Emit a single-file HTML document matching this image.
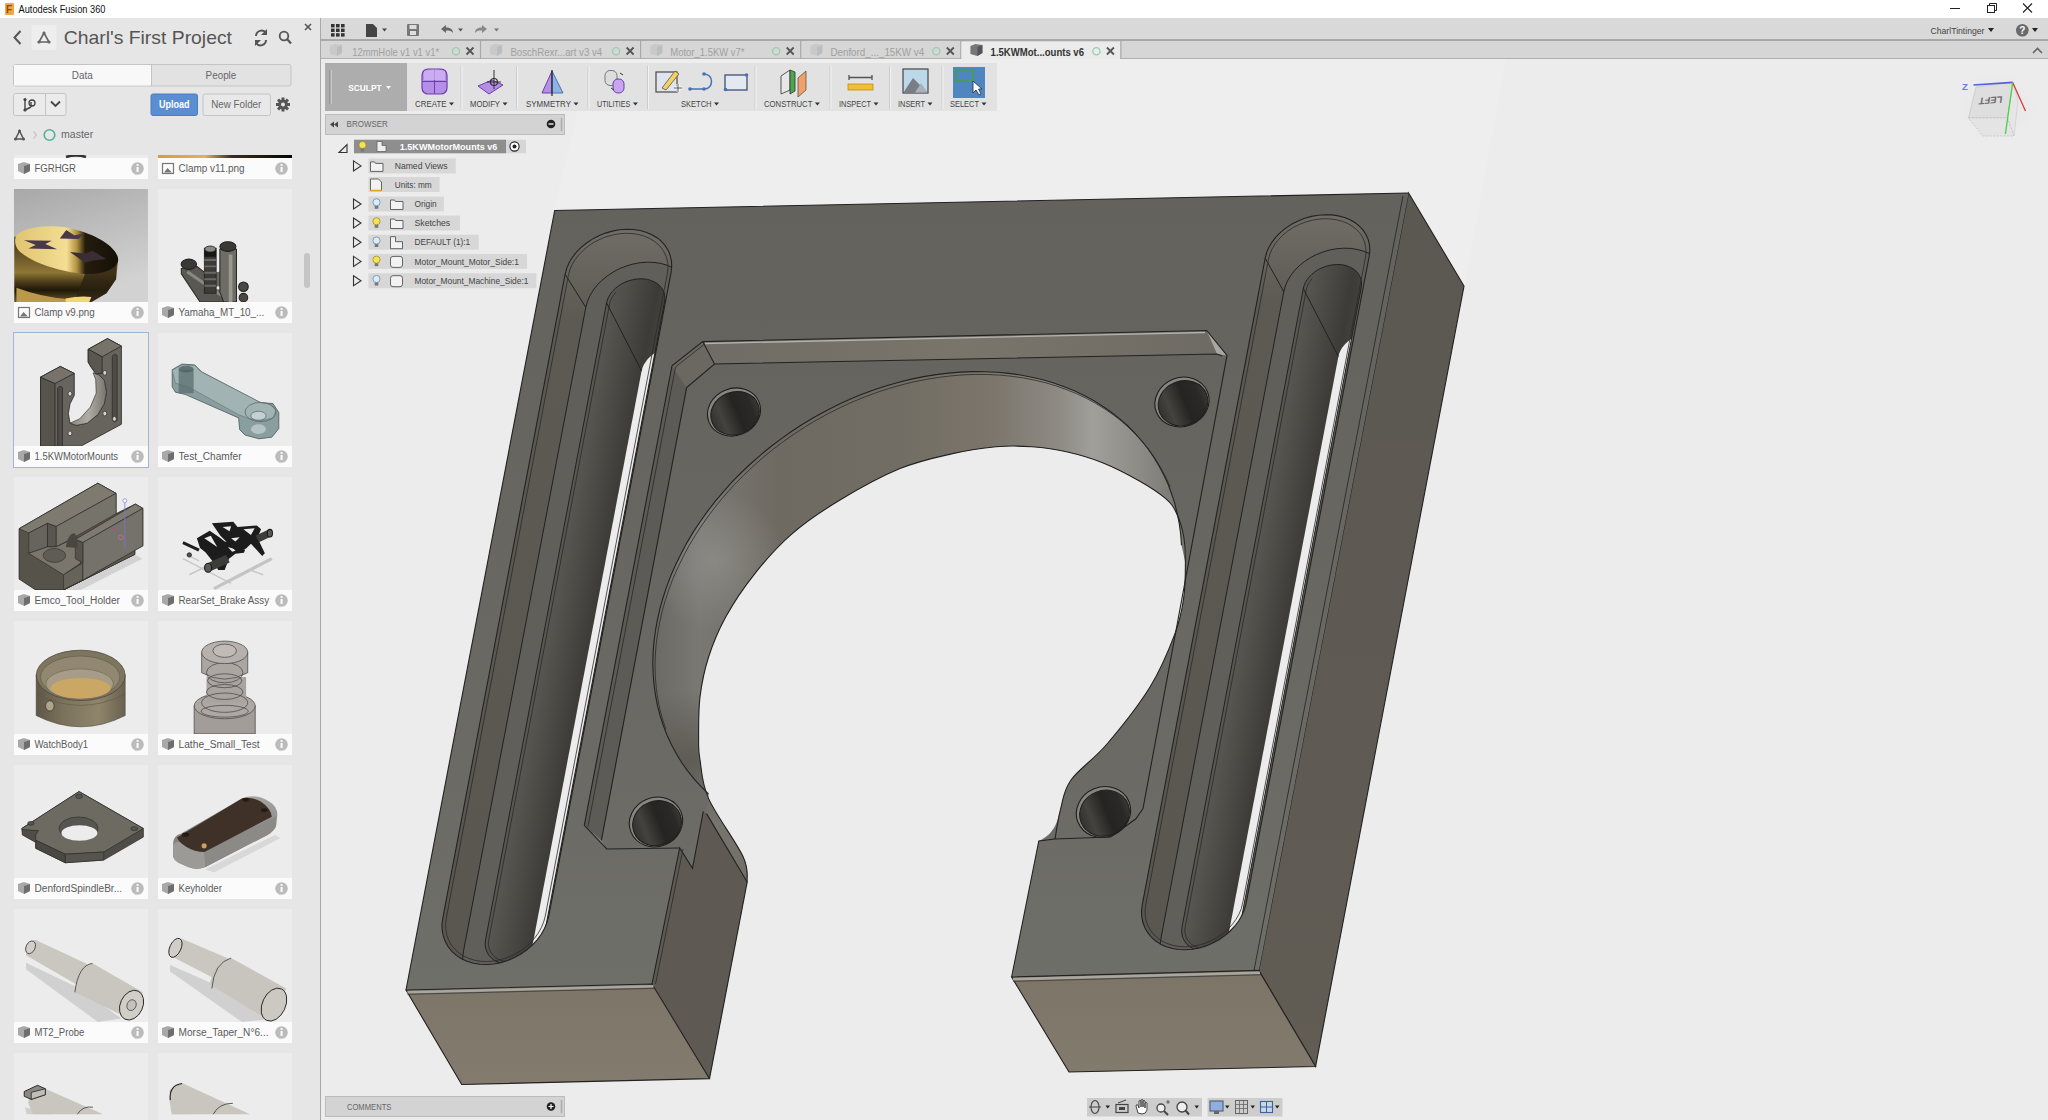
<!DOCTYPE html><html><head><meta charset="utf-8"><style>

*{box-sizing:border-box;margin:0;padding:0}
html,body{width:2048px;height:1120px;overflow:hidden;background:#ececec;font-family:"Liberation Sans", sans-serif;}
.a{position:absolute}
.t{position:absolute;white-space:nowrap;line-height:1}
svg{position:absolute;overflow:visible}

</style></head><body>
<svg style="left:0;top:0" width="2048" height="1120">
<defs>
<linearGradient id="topg" x1="0" y1="200" x2="0" y2="990" gradientUnits="userSpaceOnUse"><stop offset="0" stop-color="#63625d"/><stop offset="0.5" stop-color="#686762"/><stop offset="1" stop-color="#6f6f6a"/></linearGradient>
<linearGradient id="sideg" x1="0" y1="190" x2="0" y2="1070" gradientUnits="userSpaceOnUse"><stop offset="0" stop-color="#5b5852"/><stop offset="1" stop-color="#615c54"/></linearGradient>
<linearGradient id="frontg" x1="0" y1="980" x2="0" y2="1085" gradientUnits="userSpaceOnUse"><stop offset="0" stop-color="#7c7568"/><stop offset="1" stop-color="#827b6e"/></linearGradient>
<linearGradient id="boreg" x1="650" y1="0" x2="1190" y2="0" gradientUnits="userSpaceOnUse"><stop offset="0" stop-color="#6a6862"/><stop offset="0.09" stop-color="#7a7873"/><stop offset="0.24" stop-color="#6e6a62"/><stop offset="0.46" stop-color="#726d64"/><stop offset="0.63" stop-color="#7b756b"/><stop offset="0.76" stop-color="#8e8b85"/><stop offset="0.82" stop-color="#a19f9a"/><stop offset="0.9" stop-color="#8f8d88"/><stop offset="1" stop-color="#74726d"/></linearGradient>
<radialGradient id="borehl" cx="715" cy="560" r="70" gradientUnits="userSpaceOnUse"><stop offset="0" stop-color="#9a9894" stop-opacity="0.55"/><stop offset="1" stop-color="#9a9894" stop-opacity="0"/></radialGradient>
<radialGradient id="boredk" cx="690" cy="760" r="70" gradientUnits="userSpaceOnUse"><stop offset="0" stop-color="#4e4a43" stop-opacity="0.6"/><stop offset="1" stop-color="#4e4a43" stop-opacity="0"/></radialGradient>
<linearGradient id="pwallg" x1="700" y1="0" x2="1220" y2="0" gradientUnits="userSpaceOnUse"><stop offset="0" stop-color="#6f6c65"/><stop offset="0.5" stop-color="#7a756b"/><stop offset="1" stop-color="#6e6b64"/></linearGradient>
<linearGradient id="holeg" x1="0" y1="0" x2="1" y2="0"><stop offset="0" stop-color="#333230"/><stop offset="0.22" stop-color="#45433f"/><stop offset="0.55" stop-color="#252422"/><stop offset="0.85" stop-color="#2a2927"/><stop offset="1" stop-color="#3a3936"/></linearGradient>
<linearGradient id="cbwL" x1="0" y1="230" x2="0" y2="960" gradientUnits="userSpaceOnUse"><stop offset="0" stop-color="#706d67"/><stop offset="0.12" stop-color="#5d5a53"/><stop offset="1" stop-color="#5a5650"/></linearGradient>
<linearGradient id="cbwR" x1="0" y1="215" x2="0" y2="950" gradientUnits="userSpaceOnUse"><stop offset="0" stop-color="#706d67"/><stop offset="0.12" stop-color="#5d5a53"/><stop offset="1" stop-color="#5a5650"/></linearGradient>
<linearGradient id="thwL" x1="569" y1="500" x2="627" y2="511" gradientUnits="userSpaceOnUse"><stop offset="0" stop-color="#5a5853"/><stop offset="0.35" stop-color="#4e4c47"/><stop offset="0.8" stop-color="#3d3b37"/><stop offset="1" stop-color="#45433e"/></linearGradient>
<linearGradient id="thwR" x1="1263" y1="500" x2="1321" y2="511" gradientUnits="userSpaceOnUse"><stop offset="0" stop-color="#5a5853"/><stop offset="0.35" stop-color="#4e4c47"/><stop offset="0.8" stop-color="#3d3b37"/><stop offset="1" stop-color="#45433e"/></linearGradient>
</defs>
<path d="M590,59 L1506,59 L1465,286 L1408,193 L554,210Z" fill="#ffffff" opacity="0.12"/>
<path d="M1408.6,193.0 L1464.0,286.0 L1315.6,1066.5 L1258.8,970.4Z" fill="url(#sideg)" stroke="#222" stroke-width="1.1"/>
<path d="M554.7,210.5 L1408.6,193.0 L1258.8,970.4 L1315.6,1066.5 L1069.0,1072.0 L1011.6,977.0 L1038.8,841.0 C1056.0,833.9 1058.0,818.4 1060.7,808.6 C1063.4,798.8 1063.3,790.8 1071.0,780.0 C1078.7,769.2 1093.8,759.5 1107.0,744.0 C1120.2,728.5 1138.7,705.4 1150.0,687.0 C1161.3,668.6 1169.4,648.3 1175.0,633.6 C1180.6,618.9 1181.9,610.4 1183.6,598.6 C1185.3,586.8 1185.4,573.3 1185.4,562.9 C1185.4,552.5 1185.1,544.3 1183.6,536.0 C1182.1,527.7 1179.4,519.1 1176.4,512.9 C1173.4,506.7 1171.9,504.0 1165.7,498.6 C1159.5,493.2 1149.4,486.6 1139.0,480.7 C1128.6,474.8 1115.1,467.7 1103.2,462.9 C1091.3,458.1 1079.4,454.7 1067.5,452.0 C1055.6,449.3 1043.7,447.7 1031.8,446.8 C1019.9,445.9 1009.4,445.6 996.0,446.8 C982.6,448.0 967.4,450.3 951.4,453.9 C935.4,457.5 918.6,460.9 900.0,468.6 C881.4,476.3 858.1,489.1 840.0,500.0 C821.9,510.9 805.7,521.9 791.4,534.3 C777.1,546.7 765.2,560.5 754.3,574.3 C743.3,588.1 733.3,603.2 725.7,617.0 C718.1,630.8 712.9,643.7 708.6,657.0 C704.3,670.3 701.7,683.2 700.0,697.0 C698.3,710.8 698.6,729.5 698.6,740.0 C698.6,750.5 698.3,750.2 700.0,760.0 C701.7,769.8 701.4,782.5 708.6,798.6 C715.8,814.7 736.6,842.6 743.0,856.5 C749.4,870.4 746.5,877.8 747.2,882.0 L709.5,1078.6 L461.7,1084.5 L406,990Z" fill="url(#topg)"/>
<path d="M672.0,365.7 L686.6,387.6 L601.4,840.4 L584.3,825.4Z" fill="#5d5b56"/>
<path d="M702.7,341.6 L1206.7,330.5 L1217.0,354.0 L714.5,364.0Z" fill="url(#pwallg)"/>
<path d="M672.0,365.7 L702.7,341.6 L714.5,364.0 L686.6,387.6Z" fill="#6b6862"/>
<path d="M1206.7,330.5 L1227.0,355.4 L1217.0,354.0Z" fill="#a9a7a2"/>
<path d="M584.3,825.4 L601.4,840.4 L606.8,849.0Z" fill="#8a8984"/>
<path d="M708.5,793.9 L701.1,786.7 L694.2,779.1 L687.8,771.1 L681.8,762.7 L676.5,754.0 L671.6,745.0 L667.3,735.7 L663.5,726.1 L660.3,716.3 L657.6,706.2 L655.6,695.9 L654.1,685.4 L653.2,674.8 L652.8,664.0 L653.1,653.1 L653.9,642.1 L655.4,631.0 L657.4,619.8 L659.9,608.7 L663.1,597.5 L666.8,586.4 L671.0,575.3 L675.9,564.3 L681.2,553.4 L687.0,542.6 L693.4,531.9 L700.3,521.5 L707.6,511.2 L715.4,501.1 L723.7,491.3 L732.3,481.7 L741.4,472.5 L750.9,463.5 L760.7,454.8 L770.9,446.5 L781.4,438.6 L792.2,431.0 L803.3,423.8 L814.7,417.0 L826.2,410.7 L838.0,404.8 L849.9,399.3 L862.0,394.3 L874.2,389.8 L886.5,385.7 L898.9,382.2 L911.3,379.1 L923.7,376.6 L936.2,374.6 L948.5,373.1 L960.8,372.1 L973.0,371.6 L985.1,371.7 L997.1,372.3 L1008.8,373.4 L1020.4,375.0 L1031.7,377.2 L1042.8,379.8 L1053.6,383.0 L1064.1,386.7 L1074.2,390.8 L1084.1,395.5 L1093.5,400.6 L1102.6,406.2 L1111.3,412.2 L1119.5,418.6 L1127.3,425.5 L1134.6,432.8 L1141.4,440.5 L1147.8,448.5 L1153.6,456.9 L1158.9,465.7 L1163.7,474.7 L1168.0,484.1 L1171.6,493.7 L1174.8,503.6 L1177.3,513.7 L1179.3,524.0 L1180.7,534.5 L1181.5,545.2 L1185.4,562.9 C1185.1,558.4 1185.1,544.3 1183.6,536.0 C1182.1,527.7 1179.4,519.1 1176.4,512.9 C1173.4,506.7 1171.9,504.0 1165.7,498.6 C1159.5,493.2 1149.4,486.6 1139.0,480.7 C1128.6,474.8 1115.1,467.7 1103.2,462.9 C1091.3,458.1 1079.4,454.7 1067.5,452.0 C1055.6,449.3 1043.7,447.7 1031.8,446.8 C1019.9,445.9 1009.4,445.6 996.0,446.8 C982.6,448.0 967.4,450.3 951.4,453.9 C935.4,457.5 918.6,460.9 900.0,468.6 C881.4,476.3 858.1,489.1 840.0,500.0 C821.9,510.9 805.7,521.9 791.4,534.3 C777.1,546.7 765.2,560.5 754.3,574.3 C743.3,588.1 733.3,603.2 725.7,617.0 C718.1,630.8 712.9,643.7 708.6,657.0 C704.3,670.3 701.7,683.2 700.0,697.0 C698.3,710.8 698.6,729.5 698.6,740.0 C698.6,750.5 698.3,750.2 700.0,760.0 C701.7,769.8 701.4,782.5 708.6,798.6 C715.8,814.7 736.6,842.6 743.0,856.5 C749.4,870.4 746.5,877.8 747.2,882.0 L706.5,813.6Z" fill="url(#boreg)"/>
<path d="M708.5,793.9 L701.1,786.7 L694.2,779.1 L687.8,771.1 L681.8,762.7 L676.5,754.0 L671.6,745.0 L667.3,735.7 L663.5,726.1 L660.3,716.3 L657.6,706.2 L655.6,695.9 L654.1,685.4 L653.2,674.8 L652.8,664.0 L653.1,653.1 L653.9,642.1 L655.4,631.0 L657.4,619.8 L659.9,608.7 L663.1,597.5 L666.8,586.4 L671.0,575.3 L675.9,564.3 L681.2,553.4 L687.0,542.6 L693.4,531.9 L700.3,521.5 L707.6,511.2 L715.4,501.1 L723.7,491.3 L732.3,481.7 L741.4,472.5 L750.9,463.5 L760.7,454.8 L770.9,446.5 L781.4,438.6 L792.2,431.0 L803.3,423.8 L814.7,417.0 L826.2,410.7 L838.0,404.8 L849.9,399.3 L862.0,394.3 L874.2,389.8 L886.5,385.7 L898.9,382.2 L911.3,379.1 L923.7,376.6 L936.2,374.6 L948.5,373.1 L960.8,372.1 L973.0,371.6 L985.1,371.7 L997.1,372.3 L1008.8,373.4 L1020.4,375.0 L1031.7,377.2 L1042.8,379.8 L1053.6,383.0 L1064.1,386.7 L1074.2,390.8 L1084.1,395.5 L1093.5,400.6 L1102.6,406.2 L1111.3,412.2 L1119.5,418.6 L1127.3,425.5 L1134.6,432.8 L1141.4,440.5 L1147.8,448.5 L1153.6,456.9 L1158.9,465.7 L1163.7,474.7 L1168.0,484.1 L1171.6,493.7 L1174.8,503.6 L1177.3,513.7 L1179.3,524.0 L1180.7,534.5 L1181.5,545.2 L1185.4,562.9 C1185.1,558.4 1185.1,544.3 1183.6,536.0 C1182.1,527.7 1179.4,519.1 1176.4,512.9 C1173.4,506.7 1171.9,504.0 1165.7,498.6 C1159.5,493.2 1149.4,486.6 1139.0,480.7 C1128.6,474.8 1115.1,467.7 1103.2,462.9 C1091.3,458.1 1079.4,454.7 1067.5,452.0 C1055.6,449.3 1043.7,447.7 1031.8,446.8 C1019.9,445.9 1009.4,445.6 996.0,446.8 C982.6,448.0 967.4,450.3 951.4,453.9 C935.4,457.5 918.6,460.9 900.0,468.6 C881.4,476.3 858.1,489.1 840.0,500.0 C821.9,510.9 805.7,521.9 791.4,534.3 C777.1,546.7 765.2,560.5 754.3,574.3 C743.3,588.1 733.3,603.2 725.7,617.0 C718.1,630.8 712.9,643.7 708.6,657.0 C704.3,670.3 701.7,683.2 700.0,697.0 C698.3,710.8 698.6,729.5 698.6,740.0 C698.6,750.5 698.3,750.2 700.0,760.0 C701.7,769.8 701.4,782.5 708.6,798.6 C715.8,814.7 736.6,842.6 743.0,856.5 C749.4,870.4 746.5,877.8 747.2,882.0 L706.5,813.6Z" fill="url(#borehl)"/>
<path d="M708.5,793.9 L701.1,786.7 L694.2,779.1 L687.8,771.1 L681.8,762.7 L676.5,754.0 L671.6,745.0 L667.3,735.7 L663.5,726.1 L660.3,716.3 L657.6,706.2 L655.6,695.9 L654.1,685.4 L653.2,674.8 L652.8,664.0 L653.1,653.1 L653.9,642.1 L655.4,631.0 L657.4,619.8 L659.9,608.7 L663.1,597.5 L666.8,586.4 L671.0,575.3 L675.9,564.3 L681.2,553.4 L687.0,542.6 L693.4,531.9 L700.3,521.5 L707.6,511.2 L715.4,501.1 L723.7,491.3 L732.3,481.7 L741.4,472.5 L750.9,463.5 L760.7,454.8 L770.9,446.5 L781.4,438.6 L792.2,431.0 L803.3,423.8 L814.7,417.0 L826.2,410.7 L838.0,404.8 L849.9,399.3 L862.0,394.3 L874.2,389.8 L886.5,385.7 L898.9,382.2 L911.3,379.1 L923.7,376.6 L936.2,374.6 L948.5,373.1 L960.8,372.1 L973.0,371.6 L985.1,371.7 L997.1,372.3 L1008.8,373.4 L1020.4,375.0 L1031.7,377.2 L1042.8,379.8 L1053.6,383.0 L1064.1,386.7 L1074.2,390.8 L1084.1,395.5 L1093.5,400.6 L1102.6,406.2 L1111.3,412.2 L1119.5,418.6 L1127.3,425.5 L1134.6,432.8 L1141.4,440.5 L1147.8,448.5 L1153.6,456.9 L1158.9,465.7 L1163.7,474.7 L1168.0,484.1 L1171.6,493.7 L1174.8,503.6 L1177.3,513.7 L1179.3,524.0 L1180.7,534.5 L1181.5,545.2 L1185.4,562.9 C1185.1,558.4 1185.1,544.3 1183.6,536.0 C1182.1,527.7 1179.4,519.1 1176.4,512.9 C1173.4,506.7 1171.9,504.0 1165.7,498.6 C1159.5,493.2 1149.4,486.6 1139.0,480.7 C1128.6,474.8 1115.1,467.7 1103.2,462.9 C1091.3,458.1 1079.4,454.7 1067.5,452.0 C1055.6,449.3 1043.7,447.7 1031.8,446.8 C1019.9,445.9 1009.4,445.6 996.0,446.8 C982.6,448.0 967.4,450.3 951.4,453.9 C935.4,457.5 918.6,460.9 900.0,468.6 C881.4,476.3 858.1,489.1 840.0,500.0 C821.9,510.9 805.7,521.9 791.4,534.3 C777.1,546.7 765.2,560.5 754.3,574.3 C743.3,588.1 733.3,603.2 725.7,617.0 C718.1,630.8 712.9,643.7 708.6,657.0 C704.3,670.3 701.7,683.2 700.0,697.0 C698.3,710.8 698.6,729.5 698.6,740.0 C698.6,750.5 698.3,750.2 700.0,760.0 C701.7,769.8 701.4,782.5 708.6,798.6 C715.8,814.7 736.6,842.6 743.0,856.5 C749.4,870.4 746.5,877.8 747.2,882.0 L706.5,813.6Z" fill="url(#boredk)"/>
<path d="M692.5,868.3 L703.3,811.4 L706.5,813.6 L747.2,882.0 L709.5,1078.6 L652.0,984.0 L679.7,848.0Z" fill="#5e5a53"/>
<path d="M406.0,990.0 L652.0,984.0 L709.5,1078.6 L461.7,1084.5Z" fill="url(#frontg)" stroke="#222" stroke-width="1.1"/>
<path d="M1011.6,977.0 L1258.8,970.4 L1315.6,1066.5 L1069.0,1072.0Z" fill="url(#frontg)" stroke="#222" stroke-width="1.1"/>
<path d="M407.5,992.2 L653.5,986.2" stroke="#a9a69e" stroke-width="2.6"/><path d="M407.5,994.3 L654.5,988.3" stroke="#3a3935" stroke-width="0.8"/><path d="M1013.1,979.2 L1260,972.7" stroke="#a9a69e" stroke-width="2.6"/><path d="M1013.1,981.3 L1261,974.8" stroke="#3a3935" stroke-width="0.8"/>
<clipPath id="rimL"><path d="M671.1,272.2 L671.7,266.5 L671.4,260.9 L670.2,255.5 L668.2,250.4 L665.2,245.7 L661.5,241.4 L657.0,237.7 L651.8,234.7 L646.1,232.2 L639.9,230.5 L633.3,229.5 L626.4,229.3 L619.4,229.8 L612.4,231.1 L605.5,233.1 L598.8,235.7 L592.4,239.1 L586.5,243.0 L581.1,247.4 L576.4,252.2 L572.3,257.5 L569.0,263.0 L566.6,268.6 L565.1,274.4 L442.8,918.1 L442.0,924.3 L442.2,930.3 L443.3,936.2 L445.4,941.7 L448.2,946.8 L451.9,951.4 L456.3,955.4 L461.5,958.7 L467.1,961.3 L473.3,963.2 L479.9,964.3 L486.7,964.5 L493.7,964.0 L500.8,962.6 L507.7,960.5 L514.5,957.6 L520.9,954.0 L526.9,949.8 L532.3,945.1 L537.2,939.8 L541.3,934.2 L544.6,928.2 L547.1,922.1 L548.8,915.9Z"/></clipPath>
<clipPath id="thrL"><path d="M664.6,301.7 L664.9,298.6 L664.7,295.6 L664.1,292.8 L662.9,290.0 L661.3,287.5 L659.2,285.3 L656.8,283.3 L653.9,281.7 L650.8,280.4 L647.4,279.4 L643.8,278.9 L640.0,278.8 L636.2,279.1 L632.4,279.8 L628.6,280.8 L624.9,282.2 L621.5,284.0 L618.2,286.1 L615.3,288.5 L612.7,291.1 L610.5,293.9 L608.7,296.8 L607.4,299.8 L606.6,302.9 L485.6,939.6 L485.2,942.9 L485.3,946.1 L486.0,949.3 L487.1,952.2 L488.6,954.9 L490.7,957.4 L493.1,959.5 L495.9,961.3 L499.0,962.7 L502.4,963.7 L506.0,964.2 L509.8,964.4 L513.6,964.1 L517.4,963.4 L521.2,962.2 L524.9,960.7 L528.4,958.8 L531.7,956.5 L534.7,954.0 L537.3,951.2 L539.5,948.2 L541.4,945.0 L542.7,941.7 L543.6,938.4Z"/></clipPath>
<clipPath id="lhalfL"><path d="M369,0 L663.8,0 L483.79999999999995,1100 L169,1100Z"/></clipPath>
<path d="M671.1,272.2 L671.7,266.5 L671.4,260.9 L670.2,255.5 L668.2,250.4 L665.2,245.7 L661.5,241.4 L657.0,237.7 L651.8,234.7 L646.1,232.2 L639.9,230.5 L633.3,229.5 L626.4,229.3 L619.4,229.8 L612.4,231.1 L605.5,233.1 L598.8,235.7 L592.4,239.1 L586.5,243.0 L581.1,247.4 L576.4,252.2 L572.3,257.5 L569.0,263.0 L566.6,268.6 L565.1,274.4 L442.8,918.1 L442.0,924.3 L442.2,930.3 L443.3,936.2 L445.4,941.7 L448.2,946.8 L451.9,951.4 L456.3,955.4 L461.5,958.7 L467.1,961.3 L473.3,963.2 L479.9,964.3 L486.7,964.5 L493.7,964.0 L500.8,962.6 L507.7,960.5 L514.5,957.6 L520.9,954.0 L526.9,949.8 L532.3,945.1 L537.2,939.8 L541.3,934.2 L544.6,928.2 L547.1,922.1 L548.8,915.9Z" fill="url(#cbwL)"/>
<g clip-path="url(#rimL)">
<path d="M691.8,305.1 L692.5,299.4 L692.2,293.8 L691.0,288.4 L688.9,283.3 L686.0,278.6 L682.2,274.3 L677.7,270.6 L672.6,267.6 L666.8,265.1 L660.6,263.4 L654.0,262.4 L647.2,262.2 L640.2,262.7 L633.2,264.0 L626.3,266.0 L619.6,268.6 L613.2,272.0 L607.3,275.9 L601.9,280.3 L597.1,285.1 L593.1,290.4 L589.8,295.9 L587.4,301.5 L585.8,307.3 L463.5,951.1 L462.8,957.3 L463.0,963.3 L464.1,969.2 L466.1,974.7 L469.0,979.8 L472.6,984.4 L477.1,988.4 L482.2,991.7 L487.9,994.3 L494.1,996.2 L500.6,997.3 L507.5,997.5 L514.5,997.0 L521.5,995.6 L528.4,993.5 L535.2,990.6 L541.6,987.0 L547.6,982.8 L553.1,978.1 L557.9,972.8 L562.0,967.2 L565.4,961.2 L567.9,955.1 L569.5,948.9Z" fill="#605f5a"/>
<path d="M664.6,301.7 L664.9,298.6 L664.7,295.6 L664.1,292.8 L662.9,290.0 L661.3,287.5 L659.2,285.3 L656.8,283.3 L653.9,281.7 L650.8,280.4 L647.4,279.4 L643.8,278.9 L640.0,278.8 L636.2,279.1 L632.4,279.8 L628.6,280.8 L624.9,282.2 L621.5,284.0 L618.2,286.1 L615.3,288.5 L612.7,291.1 L610.5,293.9 L608.7,296.8 L607.4,299.8 L606.6,302.9 L485.6,939.6 L485.2,942.9 L485.3,946.1 L486.0,949.3 L487.1,952.2 L488.6,954.9 L490.7,957.4 L493.1,959.5 L495.9,961.3 L499.0,962.7 L502.4,963.7 L506.0,964.2 L509.8,964.4 L513.6,964.1 L517.4,963.4 L521.2,962.2 L524.9,960.7 L528.4,958.8 L531.7,956.5 L534.7,954.0 L537.3,951.2 L539.5,948.2 L541.4,945.0 L542.7,941.7 L543.6,938.4Z" fill="url(#thwL)"/>
<g clip-path="url(#thrL)"><path d="M699.6,369.7 L700.0,366.6 L699.8,363.6 L699.1,360.8 L698.0,358.0 L696.4,355.5 L694.3,353.3 L691.8,351.3 L689.0,349.7 L685.9,348.4 L682.5,347.4 L678.9,346.9 L675.1,346.8 L671.3,347.1 L667.5,347.8 L663.7,348.8 L660.0,350.2 L656.5,352.0 L653.3,354.1 L650.4,356.5 L647.8,359.1 L645.6,361.9 L643.8,364.8 L642.5,367.8 L641.6,370.9 L520.7,1007.6 L520.3,1010.9 L520.4,1014.1 L521.0,1017.3 L522.1,1020.2 L523.7,1022.9 L525.8,1025.4 L528.2,1027.5 L531.0,1029.3 L534.1,1030.7 L537.5,1031.7 L541.1,1032.2 L544.8,1032.4 L548.7,1032.1 L552.5,1031.4 L556.3,1030.2 L560.0,1028.7 L563.5,1026.8 L566.8,1024.5 L569.7,1022.0 L572.4,1019.2 L574.6,1016.2 L576.4,1013.0 L577.8,1009.7 L578.7,1006.4Z" fill="#ececec"/></g>
<path d="M691.8,305.1 L692.5,299.4 L692.2,293.8 L691.0,288.4 L688.9,283.3 L686.0,278.6 L682.2,274.3 L677.7,270.6 L672.6,267.6 L666.8,265.1 L660.6,263.4 L654.0,262.4 L647.2,262.2 L640.2,262.7 L633.2,264.0 L626.3,266.0 L619.6,268.6 L613.2,272.0 L607.3,275.9 L601.9,280.3 L597.1,285.1 L593.1,290.4 L589.8,295.9 L587.4,301.5 L585.8,307.3 L463.5,951.1 L462.8,957.3 L463.0,963.3 L464.1,969.2 L466.1,974.7 L469.0,979.8 L472.6,984.4 L477.1,988.4 L482.2,991.7 L487.9,994.3 L494.1,996.2 L500.6,997.3 L507.5,997.5 L514.5,997.0 L521.5,995.6 L528.4,993.5 L535.2,990.6 L541.6,987.0 L547.6,982.8 L553.1,978.1 L557.9,972.8 L562.0,967.2 L565.4,961.2 L567.9,955.1 L569.5,948.9Z" fill="none" stroke="#222" stroke-width="1"/>
<path d="M664.6,301.7 L664.9,298.6 L664.7,295.6 L664.1,292.8 L662.9,290.0 L661.3,287.5 L659.2,285.3 L656.8,283.3 L653.9,281.7 L650.8,280.4 L647.4,279.4 L643.8,278.9 L640.0,278.8 L636.2,279.1 L632.4,279.8 L628.6,280.8 L624.9,282.2 L621.5,284.0 L618.2,286.1 L615.3,288.5 L612.7,291.1 L610.5,293.9 L608.7,296.8 L607.4,299.8 L606.6,302.9 L485.6,939.6 L485.2,942.9 L485.3,946.1 L486.0,949.3 L487.1,952.2 L488.6,954.9 L490.7,957.4 L493.1,959.5 L495.9,961.3 L499.0,962.7 L502.4,963.7 L506.0,964.2 L509.8,964.4 L513.6,964.1 L517.4,963.4 L521.2,962.2 L524.9,960.7 L528.4,958.8 L531.7,956.5 L534.7,954.0 L537.3,951.2 L539.5,948.2 L541.4,945.0 L542.7,941.7 L543.6,938.4Z" fill="none" stroke="#222" stroke-width="1"/>
<g clip-path="url(#lhalfL)"><path d="M661.2,302.8 L661.5,300.0 L661.3,297.4 L660.7,294.8 L659.7,292.3 L658.3,290.1 L656.4,288.1 L654.2,286.3 L651.7,284.8 L648.9,283.7 L645.9,282.9 L642.7,282.4 L639.4,282.3 L636.0,282.5 L632.5,283.2 L629.2,284.1 L625.9,285.4 L622.8,287.0 L620.0,288.8 L617.3,290.9 L615.0,293.3 L613.1,295.8 L611.5,298.4 L610.3,301.1 L609.6,303.8 L488.8,939.5 L488.4,942.5 L488.5,945.4 L489.1,948.2 L490.1,950.9 L491.5,953.3 L493.3,955.6 L495.4,957.5 L497.9,959.1 L500.7,960.3 L503.7,961.2 L506.9,961.8 L510.2,961.9 L513.6,961.6 L517.1,961.0 L520.4,959.9 L523.7,958.6 L526.8,956.8 L529.8,954.8 L532.4,952.5 L534.8,950.0 L536.8,947.3 L538.4,944.4 L539.6,941.5 L540.4,938.5Z" fill="none" stroke="#2a2a28" stroke-width="0.8"/></g>
<path d="M565.1,274.4 L585.8,307.3" stroke="#222" stroke-width="1"/>
<path d="M606.6,302.9 L641.6,370.9" stroke="#222" stroke-width="1"/>
</g>
<path d="M671.1,272.2 L671.7,266.5 L671.4,260.9 L670.2,255.5 L668.2,250.4 L665.2,245.7 L661.5,241.4 L657.0,237.7 L651.8,234.7 L646.1,232.2 L639.9,230.5 L633.3,229.5 L626.4,229.3 L619.4,229.8 L612.4,231.1 L605.5,233.1 L598.8,235.7 L592.4,239.1 L586.5,243.0 L581.1,247.4 L576.4,252.2 L572.3,257.5 L569.0,263.0 L566.6,268.6 L565.1,274.4 L442.8,918.1 L442.0,924.3 L442.2,930.3 L443.3,936.2 L445.4,941.7 L448.2,946.8 L451.9,951.4 L456.3,955.4 L461.5,958.7 L467.1,961.3 L473.3,963.2 L479.9,964.3 L486.7,964.5 L493.7,964.0 L500.8,962.6 L507.7,960.5 L514.5,957.6 L520.9,954.0 L526.9,949.8 L532.3,945.1 L537.2,939.8 L541.3,934.2 L544.6,928.2 L547.1,922.1 L548.8,915.9Z" fill="none" stroke="#222" stroke-width="1.1"/>
<path d="M667.4,273.3 L668.0,267.9 L667.7,262.7 L666.6,257.7 L664.6,252.9 L661.9,248.5 L658.4,244.6 L654.2,241.2 L649.4,238.3 L644.0,236.0 L638.2,234.4 L632.1,233.5 L625.7,233.3 L619.1,233.8 L612.6,235.0 L606.1,236.8 L599.9,239.3 L593.9,242.4 L588.4,246.0 L583.4,250.1 L578.9,254.7 L575.1,259.5 L572.1,264.7 L569.8,270.0 L568.4,275.3 L446.3,918.0 L445.6,923.8 L445.8,929.5 L446.8,935.0 L448.7,940.1 L451.3,944.9 L454.8,949.2 L458.9,952.9 L463.7,956.1 L469.0,958.5 L474.8,960.3 L480.9,961.3 L487.3,961.5 L493.8,961.0 L500.4,959.7 L506.9,957.7 L513.2,955.0 L519.2,951.7 L524.8,947.8 L529.9,943.3 L534.4,938.4 L538.3,933.1 L541.4,927.5 L543.7,921.8 L545.3,916.0Z" fill="none" stroke="#2a2a28" stroke-width="0.8"/>
<clipPath id="rimR"><path d="M1369.2,256.0 L1369.8,250.5 L1369.5,245.1 L1368.3,239.9 L1366.2,235.0 L1363.3,230.4 L1359.6,226.4 L1355.2,222.8 L1350.1,219.8 L1344.5,217.5 L1338.4,215.9 L1331.9,214.9 L1325.2,214.7 L1318.4,215.2 L1311.5,216.4 L1304.7,218.3 L1298.1,220.9 L1291.9,224.1 L1286.1,227.9 L1280.8,232.1 L1276.1,236.8 L1272.2,241.9 L1269.0,247.2 L1266.6,252.6 L1265.2,258.2 L1142.2,905.1 L1141.5,911.0 L1141.8,916.9 L1142.9,922.5 L1144.9,927.8 L1147.7,932.7 L1151.3,937.1 L1155.7,941.0 L1160.7,944.2 L1166.3,946.7 L1172.4,948.5 L1178.8,949.5 L1185.5,949.8 L1192.4,949.3 L1199.3,948.0 L1206.1,945.9 L1212.7,943.1 L1219.0,939.7 L1224.9,935.6 L1230.2,931.0 L1234.9,926.0 L1239.0,920.5 L1242.2,914.8 L1244.7,908.9 L1246.2,902.9Z"/></clipPath>
<clipPath id="thrR"><path d="M1361.3,287.4 L1361.6,284.3 L1361.4,281.3 L1360.8,278.5 L1359.6,275.7 L1358.0,273.2 L1355.9,271.0 L1353.5,269.0 L1350.6,267.4 L1347.5,266.1 L1344.1,265.1 L1340.5,264.6 L1336.7,264.5 L1332.9,264.8 L1329.1,265.5 L1325.3,266.5 L1321.6,267.9 L1318.2,269.7 L1314.9,271.8 L1312.0,274.2 L1309.4,276.8 L1307.2,279.6 L1305.4,282.5 L1304.1,285.5 L1303.3,288.6 L1182.1,926.6 L1181.7,929.9 L1181.8,933.1 L1182.4,936.3 L1183.5,939.2 L1185.1,941.9 L1187.1,944.4 L1189.6,946.5 L1192.4,948.3 L1195.5,949.7 L1198.9,950.7 L1202.5,951.2 L1206.2,951.4 L1210.1,951.1 L1213.9,950.4 L1217.7,949.2 L1221.4,947.7 L1224.9,945.8 L1228.2,943.5 L1231.1,941.0 L1233.8,938.2 L1236.0,935.2 L1237.8,932.0 L1239.2,928.7 L1240.1,925.4Z"/></clipPath>
<clipPath id="lhalfR"><path d="M1063,0 L1357.8,0 L1177.8,1100 L863,1100Z"/></clipPath>
<path d="M1369.2,256.0 L1369.8,250.5 L1369.5,245.1 L1368.3,239.9 L1366.2,235.0 L1363.3,230.4 L1359.6,226.4 L1355.2,222.8 L1350.1,219.8 L1344.5,217.5 L1338.4,215.9 L1331.9,214.9 L1325.2,214.7 L1318.4,215.2 L1311.5,216.4 L1304.7,218.3 L1298.1,220.9 L1291.9,224.1 L1286.1,227.9 L1280.8,232.1 L1276.1,236.8 L1272.2,241.9 L1269.0,247.2 L1266.6,252.6 L1265.2,258.2 L1142.2,905.1 L1141.5,911.0 L1141.8,916.9 L1142.9,922.5 L1144.9,927.8 L1147.7,932.7 L1151.3,937.1 L1155.7,941.0 L1160.7,944.2 L1166.3,946.7 L1172.4,948.5 L1178.8,949.5 L1185.5,949.8 L1192.4,949.3 L1199.3,948.0 L1206.1,945.9 L1212.7,943.1 L1219.0,939.7 L1224.9,935.6 L1230.2,931.0 L1234.9,926.0 L1239.0,920.5 L1242.2,914.8 L1244.7,908.9 L1246.2,902.9Z" fill="url(#cbwR)"/>
<g clip-path="url(#rimR)">
<path d="M1387.8,289.5 L1388.4,284.0 L1388.1,278.6 L1386.9,273.4 L1384.8,268.5 L1381.9,263.9 L1378.3,259.9 L1373.8,256.3 L1368.8,253.3 L1363.1,251.0 L1357.0,249.4 L1350.6,248.4 L1343.8,248.2 L1337.0,248.7 L1330.1,249.9 L1323.3,251.8 L1316.8,254.4 L1310.5,257.6 L1304.7,261.4 L1299.4,265.6 L1294.8,270.3 L1290.8,275.4 L1287.6,280.7 L1285.3,286.1 L1283.8,291.7 L1161.0,938.1 L1160.3,944.0 L1160.5,949.9 L1161.6,955.5 L1163.6,960.8 L1166.4,965.7 L1170.0,970.1 L1174.4,974.0 L1179.4,977.2 L1185.0,979.7 L1191.1,981.5 L1197.6,982.5 L1204.3,982.8 L1211.1,982.3 L1218.0,981.0 L1224.8,978.9 L1231.4,976.1 L1237.7,972.7 L1243.6,968.6 L1248.9,964.0 L1253.7,959.0 L1257.7,953.5 L1260.9,947.8 L1263.4,941.9 L1265.0,935.9Z" fill="#605f5a"/>
<path d="M1361.3,287.4 L1361.6,284.3 L1361.4,281.3 L1360.8,278.5 L1359.6,275.7 L1358.0,273.2 L1355.9,271.0 L1353.5,269.0 L1350.6,267.4 L1347.5,266.1 L1344.1,265.1 L1340.5,264.6 L1336.7,264.5 L1332.9,264.8 L1329.1,265.5 L1325.3,266.5 L1321.6,267.9 L1318.2,269.7 L1314.9,271.8 L1312.0,274.2 L1309.4,276.8 L1307.2,279.6 L1305.4,282.5 L1304.1,285.5 L1303.3,288.6 L1182.1,926.6 L1181.7,929.9 L1181.8,933.1 L1182.4,936.3 L1183.5,939.2 L1185.1,941.9 L1187.1,944.4 L1189.6,946.5 L1192.4,948.3 L1195.5,949.7 L1198.9,950.7 L1202.5,951.2 L1206.2,951.4 L1210.1,951.1 L1213.9,950.4 L1217.7,949.2 L1221.4,947.7 L1224.9,945.8 L1228.2,943.5 L1231.1,941.0 L1233.8,938.2 L1236.0,935.2 L1237.8,932.0 L1239.2,928.7 L1240.1,925.4Z" fill="url(#thwR)"/>
<g clip-path="url(#thrR)"><path d="M1396.4,355.4 L1396.7,352.3 L1396.5,349.3 L1395.9,346.5 L1394.7,343.7 L1393.1,341.2 L1391.0,339.0 L1388.6,337.0 L1385.7,335.4 L1382.6,334.1 L1379.2,333.1 L1375.6,332.6 L1371.8,332.5 L1368.0,332.8 L1364.2,333.5 L1360.4,334.5 L1356.7,335.9 L1353.2,337.7 L1350.0,339.8 L1347.1,342.2 L1344.5,344.8 L1342.3,347.6 L1340.5,350.5 L1339.2,353.5 L1338.4,356.6 L1217.1,994.6 L1216.8,997.9 L1216.9,1001.1 L1217.5,1004.3 L1218.6,1007.2 L1220.2,1009.9 L1222.2,1012.4 L1224.7,1014.5 L1227.5,1016.3 L1230.6,1017.7 L1234.0,1018.7 L1237.6,1019.2 L1241.3,1019.4 L1245.1,1019.1 L1249.0,1018.4 L1252.8,1017.2 L1256.5,1015.7 L1260.0,1013.8 L1263.2,1011.5 L1266.2,1009.0 L1268.8,1006.2 L1271.1,1003.2 L1272.9,1000.0 L1274.3,996.7 L1275.1,993.4Z" fill="#ececec"/></g>
<path d="M1387.8,289.5 L1388.4,284.0 L1388.1,278.6 L1386.9,273.4 L1384.8,268.5 L1381.9,263.9 L1378.3,259.9 L1373.8,256.3 L1368.8,253.3 L1363.1,251.0 L1357.0,249.4 L1350.6,248.4 L1343.8,248.2 L1337.0,248.7 L1330.1,249.9 L1323.3,251.8 L1316.8,254.4 L1310.5,257.6 L1304.7,261.4 L1299.4,265.6 L1294.8,270.3 L1290.8,275.4 L1287.6,280.7 L1285.3,286.1 L1283.8,291.7 L1161.0,938.1 L1160.3,944.0 L1160.5,949.9 L1161.6,955.5 L1163.6,960.8 L1166.4,965.7 L1170.0,970.1 L1174.4,974.0 L1179.4,977.2 L1185.0,979.7 L1191.1,981.5 L1197.6,982.5 L1204.3,982.8 L1211.1,982.3 L1218.0,981.0 L1224.8,978.9 L1231.4,976.1 L1237.7,972.7 L1243.6,968.6 L1248.9,964.0 L1253.7,959.0 L1257.7,953.5 L1260.9,947.8 L1263.4,941.9 L1265.0,935.9Z" fill="none" stroke="#222" stroke-width="1"/>
<path d="M1361.3,287.4 L1361.6,284.3 L1361.4,281.3 L1360.8,278.5 L1359.6,275.7 L1358.0,273.2 L1355.9,271.0 L1353.5,269.0 L1350.6,267.4 L1347.5,266.1 L1344.1,265.1 L1340.5,264.6 L1336.7,264.5 L1332.9,264.8 L1329.1,265.5 L1325.3,266.5 L1321.6,267.9 L1318.2,269.7 L1314.9,271.8 L1312.0,274.2 L1309.4,276.8 L1307.2,279.6 L1305.4,282.5 L1304.1,285.5 L1303.3,288.6 L1182.1,926.6 L1181.7,929.9 L1181.8,933.1 L1182.4,936.3 L1183.5,939.2 L1185.1,941.9 L1187.1,944.4 L1189.6,946.5 L1192.4,948.3 L1195.5,949.7 L1198.9,950.7 L1202.5,951.2 L1206.2,951.4 L1210.1,951.1 L1213.9,950.4 L1217.7,949.2 L1221.4,947.7 L1224.9,945.8 L1228.2,943.5 L1231.1,941.0 L1233.8,938.2 L1236.0,935.2 L1237.8,932.0 L1239.2,928.7 L1240.1,925.4Z" fill="none" stroke="#222" stroke-width="1"/>
<g clip-path="url(#lhalfR)"><path d="M1357.9,288.5 L1358.2,285.7 L1358.0,283.1 L1357.5,280.5 L1356.4,278.0 L1355.0,275.8 L1353.2,273.8 L1351.0,272.0 L1348.4,270.5 L1345.6,269.4 L1342.6,268.6 L1339.4,268.1 L1336.1,268.0 L1332.7,268.2 L1329.3,268.9 L1325.9,269.8 L1322.6,271.1 L1319.5,272.7 L1316.7,274.5 L1314.1,276.6 L1311.7,279.0 L1309.8,281.5 L1308.2,284.1 L1307.0,286.8 L1306.3,289.5 L1185.3,926.5 L1184.9,929.5 L1185.0,932.4 L1185.6,935.2 L1186.5,937.9 L1187.9,940.3 L1189.7,942.6 L1191.9,944.5 L1194.4,946.1 L1197.2,947.3 L1200.2,948.2 L1203.4,948.8 L1206.7,948.9 L1210.1,948.6 L1213.5,948.0 L1216.9,946.9 L1220.2,945.6 L1223.3,943.8 L1226.2,941.8 L1228.9,939.5 L1231.2,937.0 L1233.2,934.3 L1234.9,931.4 L1236.1,928.5 L1236.9,925.5Z" fill="none" stroke="#2a2a28" stroke-width="0.8"/></g>
<path d="M1265.2,258.2 L1283.8,291.7" stroke="#222" stroke-width="1"/>
<path d="M1303.3,288.6 L1338.4,356.6" stroke="#222" stroke-width="1"/>
</g>
<path d="M1369.2,256.0 L1369.8,250.5 L1369.5,245.1 L1368.3,239.9 L1366.2,235.0 L1363.3,230.4 L1359.6,226.4 L1355.2,222.8 L1350.1,219.8 L1344.5,217.5 L1338.4,215.9 L1331.9,214.9 L1325.2,214.7 L1318.4,215.2 L1311.5,216.4 L1304.7,218.3 L1298.1,220.9 L1291.9,224.1 L1286.1,227.9 L1280.8,232.1 L1276.1,236.8 L1272.2,241.9 L1269.0,247.2 L1266.6,252.6 L1265.2,258.2 L1142.2,905.1 L1141.5,911.0 L1141.8,916.9 L1142.9,922.5 L1144.9,927.8 L1147.7,932.7 L1151.3,937.1 L1155.7,941.0 L1160.7,944.2 L1166.3,946.7 L1172.4,948.5 L1178.8,949.5 L1185.5,949.8 L1192.4,949.3 L1199.3,948.0 L1206.1,945.9 L1212.7,943.1 L1219.0,939.7 L1224.9,935.6 L1230.2,931.0 L1234.9,926.0 L1239.0,920.5 L1242.2,914.8 L1244.7,908.9 L1246.2,902.9Z" fill="none" stroke="#222" stroke-width="1.1"/>
<path d="M1365.5,257.1 L1366.0,252.0 L1365.7,246.9 L1364.6,242.1 L1362.7,237.5 L1360.0,233.3 L1356.5,229.5 L1352.4,226.2 L1347.7,223.5 L1342.4,221.3 L1336.7,219.8 L1330.7,218.9 L1324.4,218.7 L1318.1,219.2 L1311.6,220.3 L1305.3,222.1 L1299.2,224.5 L1293.4,227.4 L1288.0,230.9 L1283.0,234.9 L1278.7,239.3 L1275.0,243.9 L1272.1,248.9 L1269.9,253.9 L1268.5,259.1 L1145.7,905.0 L1145.1,910.6 L1145.3,916.0 L1146.3,921.3 L1148.2,926.3 L1150.8,930.8 L1154.2,935.0 L1158.3,938.6 L1162.9,941.6 L1168.2,943.9 L1173.8,945.6 L1179.8,946.6 L1186.1,946.8 L1192.5,946.3 L1198.9,945.1 L1205.3,943.2 L1211.4,940.6 L1217.3,937.3 L1222.8,933.6 L1227.8,929.3 L1232.2,924.5 L1235.9,919.5 L1239.0,914.1 L1241.3,908.6 L1242.7,903.0Z" fill="none" stroke="#2a2a28" stroke-width="0.8"/>
<g transform="rotate(-22 734 412)"><ellipse cx="734" cy="412" rx="27" ry="23.5" fill="#86857f" stroke="#1e1e1c" stroke-width="1.1"/><ellipse cx="734.5" cy="413.5" rx="24.7" ry="21.2" fill="url(#holeg)" stroke="#1e1e1c" stroke-width="1"/></g>
<g transform="rotate(-22 1182 402)"><ellipse cx="1182" cy="402" rx="27.5" ry="24.5" fill="#86857f" stroke="#1e1e1c" stroke-width="1.1"/><ellipse cx="1182.5" cy="403.5" rx="25.2" ry="22.2" fill="url(#holeg)" stroke="#1e1e1c" stroke-width="1"/></g>
<g transform="rotate(-22 656 822)"><ellipse cx="656" cy="822" rx="27" ry="24.5" fill="#86857f" stroke="#1e1e1c" stroke-width="1.1"/><ellipse cx="656.5" cy="823.5" rx="24.7" ry="22.2" fill="url(#holeg)" stroke="#1e1e1c" stroke-width="1"/></g>
<g transform="rotate(-22 1103.5 812)"><ellipse cx="1103.5" cy="812" rx="27.5" ry="25" fill="#86857f" stroke="#1e1e1c" stroke-width="1.1"/><ellipse cx="1104.0" cy="813.5" rx="25.2" ry="22.7" fill="url(#holeg)" stroke="#1e1e1c" stroke-width="1"/></g>
<path d="M406.0,990.0 L554.7,210.5 L1408.6,193.0" stroke="#222" stroke-width="1.1" fill="none"/>
<path d="M1403.0,196.0 L1254.0,970.4" stroke="#2a2a28" stroke-width="0.9"/>
<path d="M1011.6,977.0 L1038.8,841.0 L1055.0,839.0" stroke="#222" stroke-width="1.1" fill="none"/>
<path d="M1055,839 C1056.0,833.9 1058.0,818.4 1060.7,808.6 C1063.4,798.8 1063.3,790.8 1071.0,780.0 C1078.7,769.2 1093.8,759.5 1107.0,744.0 C1120.2,728.5 1138.7,705.4 1150.0,687.0 C1161.3,668.6 1169.4,648.3 1175.0,633.6 C1180.6,618.9 1181.9,610.4 1183.6,598.6 C1185.3,586.8 1185.4,573.3 1185.4,562.9 C1185.4,552.5 1185.1,544.3 1183.6,536.0 C1182.1,527.7 1179.4,519.1 1176.4,512.9 C1173.4,506.7 1171.9,504.0 1165.7,498.6 C1159.5,493.2 1149.4,486.6 1139.0,480.7 C1128.6,474.8 1115.1,467.7 1103.2,462.9 C1091.3,458.1 1079.4,454.7 1067.5,452.0 C1055.6,449.3 1043.7,447.7 1031.8,446.8 C1019.9,445.9 1009.4,445.6 996.0,446.8 C982.6,448.0 967.4,450.3 951.4,453.9 C935.4,457.5 918.6,460.9 900.0,468.6 C881.4,476.3 858.1,489.1 840.0,500.0 C821.9,510.9 805.7,521.9 791.4,534.3 C777.1,546.7 765.2,560.5 754.3,574.3 C743.3,588.1 733.3,603.2 725.7,617.0 C718.1,630.8 712.9,643.7 708.6,657.0 C704.3,670.3 701.7,683.2 700.0,697.0 C698.3,710.8 698.6,729.5 698.6,740.0 C698.6,750.5 698.3,750.2 700.0,760.0 C701.7,769.8 701.4,782.5 708.6,798.6 C715.8,814.7 736.6,842.6 743.0,856.5 C749.4,870.4 746.5,877.8 747.2,882.0" stroke="#222" stroke-width="1.1" fill="none"/>
<path d="M747.2,882.0 L709.5,1078.6" stroke="#222" stroke-width="1.1" fill="none"/>
<path d="M652.0,984.0 L679.7,848.0 L692.5,868.3 L703.3,811.4" stroke="#222" stroke-width="1.1" fill="none"/>
<path d="M655.5,984.0 L683.0,849.0" stroke="#2a2a28" stroke-width="0.8"/>
<path d="M706.5,813.6 L747.2,882.0" stroke="#222" stroke-width="1.1" fill="none"/>
<path d="M708.5,793.9 L701.1,786.7 L694.2,779.1 L687.8,771.1 L681.8,762.7 L676.5,754.0 L671.6,745.0 L667.3,735.7 L663.5,726.1 L660.3,716.3 L657.6,706.2 L655.6,695.9 L654.1,685.4 L653.2,674.8 L652.8,664.0 L653.1,653.1 L653.9,642.1 L655.4,631.0 L657.4,619.8 L659.9,608.7 L663.1,597.5 L666.8,586.4 L671.0,575.3 L675.9,564.3 L681.2,553.4 L687.0,542.6 L693.4,531.9 L700.3,521.5 L707.6,511.2 L715.4,501.1 L723.7,491.3 L732.3,481.7 L741.4,472.5 L750.9,463.5 L760.7,454.8 L770.9,446.5 L781.4,438.6 L792.2,431.0 L803.3,423.8 L814.7,417.0 L826.2,410.7 L838.0,404.8 L849.9,399.3 L862.0,394.3 L874.2,389.8 L886.5,385.7 L898.9,382.2 L911.3,379.1 L923.7,376.6 L936.2,374.6 L948.5,373.1 L960.8,372.1 L973.0,371.6 L985.1,371.7 L997.1,372.3 L1008.8,373.4 L1020.4,375.0 L1031.7,377.2 L1042.8,379.8 L1053.6,383.0 L1064.1,386.7 L1074.2,390.8 L1084.1,395.5 L1093.5,400.6 L1102.6,406.2 L1111.3,412.2 L1119.5,418.6 L1127.3,425.5 L1134.6,432.8 L1141.4,440.5 L1147.8,448.5 L1153.6,456.9 L1158.9,465.7 L1163.7,474.7 L1168.0,484.1 L1171.6,493.7 L1174.8,503.6 L1177.3,513.7 L1179.3,524.0 L1180.7,534.5 L1181.5,545.2" stroke="#222" stroke-width="1.1" fill="none"/>
<path d="M665.7,728.9 L662.5,719.1 L659.8,709.0 L657.8,698.7 L656.3,688.2 L655.4,677.6 L655.0,666.8 L655.3,655.9 L656.1,644.9 L657.6,633.8 L659.6,622.6 L662.1,611.5 L665.3,600.3 L669.0,589.2 L673.2,578.1 L678.1,567.1 L683.4,556.2 L689.2,545.4 L695.6,534.7 L702.5,524.3 L709.8,514.0 L717.6,503.9 L725.9,494.1 L734.5,484.5 L743.6,475.3 L753.1,466.3 L762.9,457.6 L773.1,449.3 L783.6,441.4 L794.4,433.8 L805.5,426.6 L816.9,419.8 L828.4,413.5 L840.2,407.6 L852.1,402.1 L864.2,397.1 L876.4,392.6 L888.7,388.5 L901.1,385.0 L913.5,381.9 L925.9,379.4 L938.4,377.4 L950.7,375.9 L963.0,374.9 L975.2,374.4 L987.3,374.5 L999.3,375.1 L1011.0,376.2 L1022.6,377.8 L1033.9,380.0 L1045.0,382.6 L1055.8,385.8 L1066.3,389.5 L1076.4,393.6 L1086.3,398.3 L1095.7,403.4 L1104.8,409.0 L1113.5,415.0 L1121.7,421.4 L1129.5,428.3 L1136.8,435.6 L1143.6,443.3 L1150.0,451.3 L1155.8,459.7 L1161.1,468.5 L1165.9,477.5 L1170.2,486.9" stroke="#2a2a28" stroke-width="0.8" fill="none"/>
<path d="M584.3,825.4 L672.0,365.7 L702.7,341.6 L1206.7,330.5 L1227.0,355.4 L1143.0,808.6 L1135.7,819.0 L1110.7,837.0 L1055.0,839.0" stroke="#222" stroke-width="1.1" fill="none"/>
<path d="M588.0,826.5 L675.5,367.0 L704.5,344.0" stroke="#2a2a28" stroke-width="0.8" fill="none"/>
<path d="M601.4,840.4 L686.6,387.6 L714.5,364.0 L1217.0,354.0 L1222.0,356.0" stroke="#222" stroke-width="1.1" fill="none"/>
<path d="M702.7,341.6 L714.5,364.0" stroke="#222" stroke-width="1.1" fill="none"/>
<path d="M584.3,825.4 L606.8,849.0 L679.7,848.0" stroke="#222" stroke-width="1.1" fill="none"/>
<path d="M705,343.5 L1205,332.5" stroke="#b3b1ab" stroke-width="1.3"/>
</svg>

<div class="a" style="left:0;top:0;width:2048px;height:18px;background:#fff"></div>
<div class="a" style="left:5px;top:3px;width:9px;height:12px;background:#f4a646;border-radius:1px"></div>
<svg style="left:0;top:0" width="2048" height="18">
 <text x="6" y="13" font-size="10" font-weight="bold" fill="#8a4a00" font-family="Liberation Sans">F</text>
 <text x="18.5" y="13" font-size="10" fill="#111" font-family="Liberation Sans" textLength="87" lengthAdjust="spacingAndGlyphs">Autodesk Fusion 360</text>
 <line x1="1950" y1="8.5" x2="1960" y2="8.5" stroke="#222" stroke-width="1"/>
 <rect x="1987.5" y="5.5" width="7" height="7" fill="none" stroke="#222" stroke-width="1"/>
 <path d="M1989.5,5.5 V3.5 H1996.5 V10.5 H1994.5" fill="none" stroke="#222" stroke-width="1"/>
 <path d="M2023,3.5 L2032,12.5 M2032,3.5 L2023,12.5" stroke="#222" stroke-width="1.1"/>
</svg>

<div class="a" style="left:0;top:18px;width:321px;height:1102px;background:#e6e6e6;border-right:1px solid #a9a9a9"></div>
<svg style="left:0;top:0" width="330" height="160">
<path d="M20.5,31 L14.5,37.5 L20.5,44" fill="none" stroke="#555" stroke-width="2"/>
<rect x="31.5" y="25" width="25" height="25" fill="#eeeeee"/>
<text x="63.7" y="43.5" font-size="19" fill="#555" font-family="Liberation Sans" textLength="168.3" lengthAdjust="spacingAndGlyphs">Charl's First Project</text>
<path d="M44,33 L39,42 H49Z" fill="none" stroke="#666" stroke-width="1.6"/><circle cx="44" cy="33" r="1.6" fill="#666"/><circle cx="39" cy="42" r="1.6" fill="#666"/><circle cx="49" cy="42" r="1.6" fill="#666"/>
<path d="M256,36 A5.5,5.5 0 0 1 266,33" fill="none" stroke="#555" stroke-width="2"/><path d="M267,29 V35 H261Z" fill="#555"/><path d="M266,40 A5.5,5.5 0 0 1 256,43" fill="none" stroke="#555" stroke-width="2"/><path d="M255,46 V40 H261Z" fill="#555"/>
<circle cx="284" cy="36" r="4.3" fill="none" stroke="#555" stroke-width="1.8"/><path d="M287,39 L291,43.5" stroke="#555" stroke-width="2.2"/>
<path d="M305,24 L311,30 M311,24 L305,30" stroke="#555" stroke-width="1.6"/>
<rect x="13.5" y="64.5" width="277.5" height="21.5" rx="2" fill="#e2e2e2" stroke="#c4c4c4"/>
<rect x="14" y="65" width="137.5" height="20.5" fill="#f8f8f8"/><line x1="151.5" y1="65" x2="151.5" y2="86" stroke="#c4c4c4"/>
<text x="71.8" y="78.5" font-size="10.5" fill="#666" font-family="Liberation Sans" textLength="20.9" lengthAdjust="spacingAndGlyphs">Data</text>
<text x="205.6" y="78.5" font-size="10.5" fill="#666" font-family="Liberation Sans" textLength="30.7" lengthAdjust="spacingAndGlyphs">People</text>
<rect x="13.5" y="93.5" width="52.5" height="22" rx="2" fill="#ebebeb" stroke="#c4c4c4"/><line x1="45.5" y1="94" x2="45.5" y2="115.5" stroke="#c4c4c4"/>
<path d="M25,100 V110 M25,110 L31,107 M31,107 V102" fill="none" stroke="#444" stroke-width="1.4"/><circle cx="25" cy="99.5" r="1.6" fill="#444"/><circle cx="25" cy="110" r="1.6" fill="#444"/><circle cx="32" cy="103" r="3" fill="none" stroke="#444" stroke-width="1.3"/>
<path d="M51,101.5 L55.5,106 L60,101.5" fill="none" stroke="#444" stroke-width="1.8"/>
<rect x="151" y="94" width="46.5" height="21.5" rx="2" fill="#5b8ed1" stroke="#4b7dc0"/>
<text x="158.9" y="108.4" font-size="10.5" font-weight="bold" fill="#fff" font-family="Liberation Sans" textLength="30.6" lengthAdjust="spacingAndGlyphs">Upload</text>
<rect x="203" y="94" width="67.5" height="21.5" rx="2" fill="#e8e8e8" stroke="#c4c4c4"/>
<text x="211.3" y="108.4" font-size="10.5" fill="#666" font-family="Liberation Sans" textLength="50" lengthAdjust="spacingAndGlyphs">New Folder</text>
<rect x="281.5" y="97.5" width="3" height="4" fill="#555" transform="rotate(0 283 104.5)"/><rect x="281.5" y="97.5" width="3" height="4" fill="#555" transform="rotate(45 283 104.5)"/><rect x="281.5" y="97.5" width="3" height="4" fill="#555" transform="rotate(90 283 104.5)"/><rect x="281.5" y="97.5" width="3" height="4" fill="#555" transform="rotate(135 283 104.5)"/><rect x="281.5" y="97.5" width="3" height="4" fill="#555" transform="rotate(180 283 104.5)"/><rect x="281.5" y="97.5" width="3" height="4" fill="#555" transform="rotate(225 283 104.5)"/><rect x="281.5" y="97.5" width="3" height="4" fill="#555" transform="rotate(270 283 104.5)"/><rect x="281.5" y="97.5" width="3" height="4" fill="#555" transform="rotate(315 283 104.5)"/>
<circle cx="283" cy="104.5" r="4.8" fill="#555"/><circle cx="283" cy="104.5" r="2" fill="#e6e6e6"/>
<path d="M19.5,131 L15.5,139 H23.5Z" fill="none" stroke="#555" stroke-width="1.5"/><circle cx="19.5" cy="131" r="1.5" fill="#555"/><circle cx="15.5" cy="139" r="1.5" fill="#555"/><circle cx="23.5" cy="139" r="1.5" fill="#555"/>
<path d="M33.5,131.5 L36.5,135 L33.5,138.5" fill="none" stroke="#c8c8c8" stroke-width="1.3"/>
<circle cx="49.5" cy="135" r="5.3" fill="none" stroke="#4fb39a" stroke-width="1.6"/>
<text x="61" y="138.4" font-size="11.5" fill="#666" font-family="Liberation Sans" textLength="32.2" lengthAdjust="spacingAndGlyphs">master</text>
</svg>
<div class="a" style="left:304px;top:253px;width:6px;height:35px;background:#c5c5c5;border-radius:3px"></div>
<div class="a" style="left:0;top:155px;width:318px;height:965px;overflow:hidden">
<svg style="left:0;top:0" width="318" height="965">
<rect x="14" y="-110" width="134" height="113" fill="#ececec"/>
<path d="M66,2 Q76,-1 86,2" stroke="#333" stroke-width="2.5" fill="none"/>
<rect x="14" y="3" width="134" height="21" fill="#fbfbfb"/>
<path d="M18,9 L24,7 L30,9 V16 L24,19 L18,16Z" fill="#a8a8a8"/><path d="M24,11 L30,9 V16 L24,19Z" fill="#6e6e6e"/>
<text x="34.5" y="17" font-size="10" fill="#5a5a5a" font-family="Liberation Sans" textLength="41.4" lengthAdjust="spacingAndGlyphs">FGRHGR</text>
<circle cx="137.5" cy="13.5" r="6.3" fill="#bcbcbc"/><circle cx="137.5" cy="10" r="1.1" fill="#fff"/><rect x="136.6" y="12" width="1.9" height="5" fill="#fff"/>
<rect x="158" y="-110" width="134" height="113" fill="#ececec"/>
<defs><linearGradient id="cl11" x1="0" x2="1"><stop offset="0" stop-color="#d99b3a"/><stop offset="0.35" stop-color="#e0b060"/><stop offset="0.55" stop-color="#3a2e18"/><stop offset="1" stop-color="#050505"/></linearGradient></defs><rect x="158" y="0" width="134" height="3" fill="url(#cl11)"/>
<rect x="158" y="3" width="134" height="21" fill="#fbfbfb"/>
<rect x="162.5" y="8.5" width="11" height="10" fill="none" stroke="#777" stroke-width="1.2"/><path d="M164,17.5 L167.5,13 L170,15.5 L172,17.5Z" fill="#777"/>
<text x="178.5" y="17" font-size="10" fill="#5a5a5a" font-family="Liberation Sans" textLength="66.1" lengthAdjust="spacingAndGlyphs">Clamp v11.png</text>
<circle cx="281.5" cy="13.5" r="6.3" fill="#bcbcbc"/><circle cx="281.5" cy="10" r="1.1" fill="#fff"/><rect x="280.6" y="12" width="1.9" height="5" fill="#fff"/>
<rect x="14" y="34" width="134" height="113" fill="#ececec"/>
<g transform="translate(10.00,30.00) scale(0.10711)"><defs><linearGradient id="c9bg" x1="0" y1="0" x2="0.4" y2="1"><stop offset="0" stop-color="#a8a8a8"/><stop offset="1" stop-color="#d2d2d2"/></linearGradient>
<linearGradient id="c9top" x1="0" y1="0" x2="1" y2="0"><stop offset="0" stop-color="#e0c470"/><stop offset="0.5" stop-color="#f3de94"/><stop offset="0.6" stop-color="#b09040"/><stop offset="0.68" stop-color="#241c0c"/><stop offset="1" stop-color="#151008"/></linearGradient>
<linearGradient id="c9side" x1="0" y1="0" x2="0" y2="1"><stop offset="0" stop-color="#3e3218"/><stop offset="0.3" stop-color="#6a5628"/><stop offset="0.55" stop-color="#8f7636"/><stop offset="0.7" stop-color="#4a3a18"/><stop offset="0.82" stop-color="#1e1808"/><stop offset="1" stop-color="#6a5628"/></linearGradient></defs>
<rect x="37" y="37" width="1251" height="1055" fill="url(#c9bg)"/>
<path d="M40,480 L40,1092 L760,1092 L900,1010 L990,880 L1010,700 Z" fill="url(#c9side)"/>
<path d="M700,830 L1000,700 L990,880 L900,1010 L760,1092 L600,1092Z" fill="#2a2210" opacity="0.8"/>
<path d="M60,470 C150,380 450,360 620,420 C850,480 1010,600 1010,700 C1000,790 850,840 700,830 C450,810 200,720 90,620 C40,570 40,500 60,470Z" fill="url(#c9top)"/>
<path d="M130,515 L390,520 L330,550 L440,600 L170,592 L240,560Z" fill="#4a3848"/>
<path d="M465,500 L525,420 L600,470 L690,455 L640,505Z" fill="#4a3848"/>
<path d="M560,625 L700,640 L770,615 L900,690 L780,705 L700,725Z" fill="#3a2e34"/>
<path d="M60,960 Q300,1050 540,1065 L760,1045 L700,1092 L60,1092Z" fill="#b89a48"/>
<path d="M520,1060 Q650,1030 760,1045 L740,1092 L520,1092Z" fill="#f0d870"/></g>
<rect x="14" y="147" width="134" height="21" fill="#fbfbfb"/>
<rect x="18.5" y="152.5" width="11" height="10" fill="none" stroke="#777" stroke-width="1.2"/><path d="M20,161.5 L23.5,157 L26,159.5 L28,161.5Z" fill="#777"/>
<text x="34.5" y="161" font-size="10" fill="#5a5a5a" font-family="Liberation Sans" textLength="60.2" lengthAdjust="spacingAndGlyphs">Clamp v9.png</text>
<circle cx="137.5" cy="157.5" r="6.3" fill="#bcbcbc"/><circle cx="137.5" cy="154" r="1.1" fill="#fff"/><rect x="136.6" y="156" width="1.9" height="5" fill="#fff"/>
<rect x="158" y="34" width="134" height="113" fill="#ececec"/>
<g transform="translate(154.00,30.00) scale(0.10711)"><path d="M255,780 L400,760 L690,990 L700,1092 L430,1092 L255,830Z" fill="#5a5852" stroke="#2a2a28" stroke-width="10"/>
<path d="M310,810 L660,1050" stroke="#8a8880" stroke-width="30"/>
<ellipse cx="325" cy="740" rx="72" ry="48" fill="#3a3935" stroke="#222" stroke-width="10"/>
<path d="M560,820 L650,800 L650,1000 L580,980Z" fill="#6a6862"/>
<ellipse cx="600" cy="960" rx="30" ry="15" fill="#ececec"/>
<path d="M615,600 L770,600 L770,1092 L650,1092 L615,1000Z" fill="#6e6c65" stroke="#2a2a28" stroke-width="10"/>
<path d="M715,650 L715,1092" stroke="#9a9892" stroke-width="35"/>
<ellipse cx="690" cy="575" rx="75" ry="45" fill="#3a3935" stroke="#222" stroke-width="10"/>
<rect x="470" y="590" width="110" height="420" fill="#3c3b37" stroke="#222" stroke-width="8"/>
<rect x="470" y="610" width="110" height="60" fill="#161614"/>
<path d="M470,700 H580 M470,760 H580 M470,820 H580 M470,880 H580 M470,940 H580" stroke="#6b6963" stroke-width="18"/>
<ellipse cx="525" cy="598" rx="52" ry="28" fill="#8a8880" stroke="#222" stroke-width="8"/>
<circle cx="835" cy="950" r="45" fill="#4a4844" stroke="#222" stroke-width="10"/>
<circle cx="835" cy="1052" r="40" fill="#4a4844" stroke="#222" stroke-width="10"/></g>
<rect x="158" y="147" width="134" height="21" fill="#fbfbfb"/>
<path d="M162,153 L168,151 L174,153 V160 L168,163 L162,160Z" fill="#a8a8a8"/><path d="M168,155 L174,153 V160 L168,163Z" fill="#6e6e6e"/>
<text x="178.5" y="161" font-size="10" fill="#5a5a5a" font-family="Liberation Sans" textLength="85.8" lengthAdjust="spacingAndGlyphs">Yamaha_MT_10_...</text>
<circle cx="281.5" cy="157.5" r="6.3" fill="#bcbcbc"/><circle cx="281.5" cy="154" r="1.1" fill="#fff"/><rect x="280.6" y="156" width="1.9" height="5" fill="#fff"/>
<rect x="14" y="178" width="134" height="113" fill="#ececec"/>
<g transform="translate(10.00,175.00) scale(0.10711)"><defs><linearGradient id="mmb" x1="0" y1="0" x2="1" y2="0"><stop offset="0" stop-color="#8a877f"/><stop offset="0.5" stop-color="#b0ada6"/><stop offset="1" stop-color="#77746c"/></linearGradient></defs>
<path d="M285,440 L470,340 L600,405 L600,610 L560,690 L545,780 L560,870 L620,890 L720,870 L820,790 L880,690 L900,580 L880,470 L830,420 L800,400 L760,350 L730,300 L730,180 L910,80 L1040,150 L1040,880 L660,1085 L285,1085Z" fill="#67645d" stroke="#2e2d2a" stroke-width="8"/>
<path d="M560,870 L650,830 L750,720 L805,590 L800,460 L775,400 L830,420 L880,470 L900,580 L880,690 L820,790 L720,870 L620,890Z" fill="url(#mmb)" stroke="#2e2d2a" stroke-width="6"/>
<path d="M285,440 L420,500 L420,1085 L285,1085Z" fill="#57544e" stroke="#2e2d2a" stroke-width="8"/>
<path d="M285,440 L470,340 L600,405 L420,500Z" fill="#77736b" stroke="#2e2d2a" stroke-width="8"/>
<path d="M730,180 L910,80 L1040,150 L860,250Z" fill="#77736b" stroke="#2e2d2a" stroke-width="8"/>
<path d="M730,180 L860,250 L860,405 L800,410 L760,350 L730,300Z" fill="#5a5751" stroke="#2e2d2a" stroke-width="8"/>
<path d="M445,545 Q467,510 490,540 L490,1085 L445,1085Z" fill="#4e4c47" stroke="#2a2a28" stroke-width="7"/>
<path d="M955,245 Q977,210 1000,240 L1000,840 Q977,875 955,840Z" fill="#4e4c47" stroke="#2a2a28" stroke-width="7"/>
<g fill="#d8d6d0" stroke="#333" stroke-width="7"><ellipse cx="560" cy="595" rx="18" ry="22"/><ellipse cx="885" cy="400" rx="18" ry="22"/><ellipse cx="885" cy="780" rx="18" ry="22"/><ellipse cx="560" cy="965" rx="18" ry="22"/><ellipse cx="975" cy="830" rx="18" ry="22"/></g></g>
<rect x="14" y="291" width="134" height="21" fill="#fbfbfb"/>
<path d="M18,297 L24,295 L30,297 V304 L24,307 L18,304Z" fill="#a8a8a8"/><path d="M24,299 L30,297 V304 L24,307Z" fill="#6e6e6e"/>
<text x="34.5" y="305" font-size="10" fill="#5a5a5a" font-family="Liberation Sans" textLength="83.6" lengthAdjust="spacingAndGlyphs">1.5KWMotorMounts</text>
<circle cx="137.5" cy="301.5" r="6.3" fill="#bcbcbc"/><circle cx="137.5" cy="298" r="1.1" fill="#fff"/><rect x="136.6" y="300" width="1.9" height="5" fill="#fff"/>
<rect x="13.5" y="177.5" width="135" height="135" fill="none" stroke="#9fb6d6" stroke-width="1"/>
<rect x="158" y="178" width="134" height="113" fill="#ececec"/>
<g transform="translate(154.00,174.00) scale(0.10711)"><path d="M170,380 L260,328 L380,335 L445,400 L1000,690 L1110,695 L1165,780 L1165,930 L1100,1010 L980,1025 L850,990 L800,940 L790,830 L290,610 L200,590 L170,540Z" fill="#8a9ea0" stroke="#4e6062" stroke-width="8"/>
<path d="M170,385 L260,335 L380,340 L440,400 L1000,690 L1080,700 L1140,760 L1110,830 L1000,855 L900,840 L790,800 L330,545 L200,505Z" fill="#a2b3b4" stroke="#5e7072" stroke-width="5"/>
<path d="M230,380 L370,380 L370,600 L230,600Z" fill="#5a6e70" opacity="0.75"/>
<ellipse cx="300" cy="375" rx="70" ry="32" fill="#4f6264" opacity="0.8"/>
<ellipse cx="995" cy="775" rx="145" ry="90" fill="none" stroke="#56686a" stroke-width="7"/>
<ellipse cx="975" cy="810" rx="72" ry="42" fill="#c4d0d1" stroke="#56686a" stroke-width="7"/>
<ellipse cx="975" cy="935" rx="70" ry="45" fill="#c0cccd" opacity="0.8"/></g>
<rect x="158" y="291" width="134" height="21" fill="#fbfbfb"/>
<path d="M162,297 L168,295 L174,297 V304 L168,307 L162,304Z" fill="#a8a8a8"/><path d="M168,299 L174,297 V304 L168,307Z" fill="#6e6e6e"/>
<text x="178.5" y="305" font-size="10" fill="#5a5a5a" font-family="Liberation Sans" textLength="63" lengthAdjust="spacingAndGlyphs">Test_Chamfer</text>
<circle cx="281.5" cy="301.5" r="6.3" fill="#bcbcbc"/><circle cx="281.5" cy="298" r="1.1" fill="#fff"/><rect x="280.6" y="300" width="1.9" height="5" fill="#fff"/>
<rect x="14" y="322" width="134" height="113" fill="#ececec"/>
<g transform="translate(10.00,318.00) scale(0.10711)"><path d="M500,1092 L1165,760 L1235,800 L660,1092Z" fill="#d2d2d2"/>
<path d="M85,520 L820,95 L990,190 L990,380 L1170,290 L1240,330 L1240,680 L1165,720 L1165,760 L500,1092 L240,1092 L85,990Z" fill="#56534b" stroke="#2e2d2a" stroke-width="8"/>
<path d="M85,520 L820,95 L990,190 L430,500 L350,470 L175,560Z" fill="#7e7a6f" stroke="#2e2d2a" stroke-width="7"/>
<path d="M430,500 L990,190 L990,380 L620,590 L430,690Z" fill="#76736a" stroke="#2e2d2a" stroke-width="6"/>
<path d="M175,560 L350,470 L350,690 L175,750Z" fill="#66645c" stroke="#2e2d2a" stroke-width="6"/>
<path d="M350,470 L430,500 L430,690 L350,690Z" fill="#58564f" stroke="#2e2d2a" stroke-width="6"/>
<path d="M175,750 L350,690 L430,690 L620,600 L660,840 L500,950Z" fill="#7a766c" stroke="#2e2d2a" stroke-width="6"/>
<path d="M500,950 L680,840 L680,1000 L500,1092Z" fill="#66635b" stroke="#2e2d2a" stroke-width="6"/>
<path d="M680,1000 L1165,720 L1165,760 L500,1092 L500,1092Z" fill="#5e5b54" stroke="#2e2d2a" stroke-width="6"/>
<path d="M610,620 L1170,290 L1240,330 L680,650Z" fill="#7e7a6f" stroke="#2e2d2a" stroke-width="7"/>
<path d="M680,650 L1240,330 L1240,680 L680,1000Z" fill="#74726a" stroke="#2e2d2a" stroke-width="6"/>
<path d="M610,620 L680,650 L680,840 L610,800Z" fill="#55534c" stroke="#2e2d2a" stroke-width="6"/>
<ellipse cx="415" cy="770" rx="105" ry="65" fill="#5e5c55" stroke="#333" stroke-width="6"/>
<path d="M520,690 Q540,570 600,560 Q630,580 630,700Z" fill="#48463f"/>
<path d="M1072,255 V710" stroke="#7878d8" stroke-width="7"/><circle cx="1072" cy="258" r="18" fill="#fff" stroke="#7070e0" stroke-width="6"/>
<circle cx="1035" cy="600" r="22" fill="none" stroke="#d070a0" stroke-width="7"/><circle cx="970" cy="520" r="12" fill="#b05080"/></g>
<rect x="14" y="435" width="134" height="21" fill="#fbfbfb"/>
<path d="M18,441 L24,439 L30,441 V448 L24,451 L18,448Z" fill="#a8a8a8"/><path d="M24,443 L30,441 V448 L24,451Z" fill="#6e6e6e"/>
<text x="34.5" y="449" font-size="10" fill="#5a5a5a" font-family="Liberation Sans" textLength="85.4" lengthAdjust="spacingAndGlyphs">Emco_Tool_Holder</text>
<circle cx="137.5" cy="445.5" r="6.3" fill="#bcbcbc"/><circle cx="137.5" cy="442" r="1.1" fill="#fff"/><rect x="136.6" y="444" width="1.9" height="5" fill="#fff"/>
<rect x="158" y="322" width="134" height="113" fill="#ececec"/>
<g transform="translate(154.00,318.00) scale(0.10711)"><path d="M270,800 L720,1030 M330,950 L470,880 M880,900 L1020,950 M300,760 L420,820" stroke="#c8c8c8" stroke-width="14" fill="none"/>
<path d="M560,1080 L1100,800" stroke="#c4c4c4" stroke-width="30"/>
<path d="M270,650 L420,720" stroke="#1e1e1e" stroke-width="28"/>
<circle cx="330" cy="765" r="20" fill="#555" stroke="#222" stroke-width="8"/>
<path d="M400,610 L520,540 L610,600 L660,640 L740,650 L850,720 L840,745 L760,755 L700,800 L660,905 L600,905 L560,840 L480,740 L430,700Z" fill="#1c1c1c"/>
<path d="M470,610 L530,585 L590,690Z" fill="#ececec"/>
<path d="M690,690 L780,720 L730,735Z" fill="#ececec"/>
<path d="M540,470 L740,455 L780,505 L960,490 L1000,525 L965,605 L1035,750 L1010,775 L905,660 L860,705 L780,745 L620,585Z" fill="#1c1c1c"/>
<path d="M640,505 L720,498 L705,545Z" fill="#ececec"/>
<path d="M835,525 L940,515 L905,580Z" fill="#ececec"/>
<path d="M720,610 L800,600 L760,640Z" fill="#ececec"/>
<path d="M500,885 L690,800" stroke="#3c3c3a" stroke-width="80"/>
<ellipse cx="505" cy="885" rx="33" ry="42" fill="#5a5a58" stroke="#1a1a1a" stroke-width="10"/>
<path d="M965,615 L1080,562" stroke="#3c3c3a" stroke-width="70"/>
<ellipse cx="1082" cy="562" rx="24" ry="36" fill="#5a5a58" stroke="#1a1a1a" stroke-width="10"/></g>
<rect x="158" y="435" width="134" height="21" fill="#fbfbfb"/>
<path d="M162,441 L168,439 L174,441 V448 L168,451 L162,448Z" fill="#a8a8a8"/><path d="M168,443 L174,441 V448 L168,451Z" fill="#6e6e6e"/>
<text x="178.5" y="449" font-size="10" fill="#5a5a5a" font-family="Liberation Sans" textLength="90.6" lengthAdjust="spacingAndGlyphs">RearSet_Brake Assy</text>
<circle cx="281.5" cy="445.5" r="6.3" fill="#bcbcbc"/><circle cx="281.5" cy="442" r="1.1" fill="#fff"/><rect x="280.6" y="444" width="1.9" height="5" fill="#fff"/>
<rect x="14" y="466" width="134" height="113" fill="#ececec"/>
<g transform="translate(10.00,462.00) scale(0.10711)"><defs><linearGradient id="wbg" x1="0" x2="1"><stop offset="0" stop-color="#5e5746"/><stop offset="0.3" stop-color="#7b725c"/><stop offset="0.7" stop-color="#8f856c"/><stop offset="1" stop-color="#6a624f"/></linearGradient></defs>
<path d="M245,540 L245,920 Q660,1130 1075,920 L1075,540Z" fill="url(#wbg)" stroke="#4a4538" stroke-width="6"/>
<ellipse cx="660" cy="545" rx="415" ry="235" fill="#7e755f" stroke="#4a4538" stroke-width="7"/>
<ellipse cx="655" cy="560" rx="370" ry="195" fill="#928872" stroke="#5a5444" stroke-width="5"/>
<ellipse cx="650" cy="625" rx="315" ry="140" fill="#a69c88" stroke="#6e6654" stroke-width="6"/>
<ellipse cx="660" cy="665" rx="280" ry="95" fill="#cba765"/>
<path d="M245,720 Q660,930 1075,720" fill="none" stroke="#5a5444" stroke-width="5"/>
<ellipse cx="372" cy="830" rx="40" ry="48" fill="#b0a58c" stroke="#3a352a" stroke-width="7"/></g>
<rect x="14" y="579" width="134" height="21" fill="#fbfbfb"/>
<path d="M18,585 L24,583 L30,585 V592 L24,595 L18,592Z" fill="#a8a8a8"/><path d="M24,587 L30,585 V592 L24,595Z" fill="#6e6e6e"/>
<text x="34.5" y="593" font-size="10" fill="#5a5a5a" font-family="Liberation Sans" textLength="53.5" lengthAdjust="spacingAndGlyphs">WatchBody1</text>
<circle cx="137.5" cy="589.5" r="6.3" fill="#bcbcbc"/><circle cx="137.5" cy="586" r="1.1" fill="#fff"/><rect x="136.6" y="588" width="1.9" height="5" fill="#fff"/>
<rect x="158" y="466" width="134" height="113" fill="#ececec"/>
<g transform="translate(154.00,462.00) scale(0.10711)"><g stroke="#4a4644" stroke-width="7">
<path d="M375,830 L375,1092 L945,1092 L945,830Z" fill="#a39d99"/>
<ellipse cx="660" cy="830" rx="285" ry="120" fill="#aea8a4"/>
<path d="M490,560 L490,800 L860,800 L860,560Z" fill="#aaa4a0" stroke="none"/>
<ellipse cx="660" cy="880" rx="220" ry="55" fill="none"/>
<ellipse cx="660" cy="700" rx="170" ry="70" fill="none"/>
<ellipse cx="660" cy="800" rx="215" ry="90" fill="none"/>
<path d="M445,330 L445,520 Q660,640 875,520 L875,330Z" fill="#aca6a2"/>
<ellipse cx="660" cy="520" rx="170" ry="95" fill="none"/>
<ellipse cx="660" cy="595" rx="160" ry="65" fill="none"/>
<ellipse cx="660" cy="330" rx="215" ry="105" fill="#b7b1ad"/>
<ellipse cx="660" cy="315" rx="110" ry="62" fill="#c1bbb7"/>
</g></g>
<rect x="158" y="579" width="134" height="21" fill="#fbfbfb"/>
<path d="M162,585 L168,583 L174,585 V592 L168,595 L162,592Z" fill="#a8a8a8"/><path d="M168,587 L174,585 V592 L168,595Z" fill="#6e6e6e"/>
<text x="178.5" y="593" font-size="10" fill="#5a5a5a" font-family="Liberation Sans" textLength="81.2" lengthAdjust="spacingAndGlyphs">Lathe_Small_Test</text>
<circle cx="281.5" cy="589.5" r="6.3" fill="#bcbcbc"/><circle cx="281.5" cy="586" r="1.1" fill="#fff"/><rect x="280.6" y="588" width="1.9" height="5" fill="#fff"/>
<rect x="14" y="610" width="134" height="113" fill="#ececec"/>
<g transform="translate(10.00,606.00) scale(0.10711)"><path d="M110,630 L645,285 L1245,630 L1245,710 L875,925 L515,950 L240,815 L240,760 L115,690Z" fill="#4f4d47" stroke="#2e2d2a" stroke-width="7"/>
<path d="M110,630 L645,285 L1245,630 L875,850 L515,870 L240,740 L240,690 L265,650 L115,640Z" fill="#6d6a62" stroke="#2e2d2a" stroke-width="7"/>
<path d="M515,870 L875,850 L875,925 L515,950Z" fill="#56544d" stroke="#2e2d2a" stroke-width="6"/>
<path d="M240,740 L515,870 L515,950 L240,815Z" fill="#4a4843" stroke="#2e2d2a" stroke-width="6"/>
<ellipse cx="640" cy="630" rx="182" ry="108" fill="#57554f" stroke="#2e2d2a" stroke-width="6"/>
<ellipse cx="648" cy="672" rx="168" ry="72" fill="#ececec"/>
<g fill="#555" stroke="#2a2a28" stroke-width="6"><ellipse cx="645" cy="330" rx="32" ry="20"/><ellipse cx="195" cy="582" rx="30" ry="18"/><ellipse cx="1160" cy="632" rx="32" ry="18"/></g></g>
<rect x="14" y="723" width="134" height="21" fill="#fbfbfb"/>
<path d="M18,729 L24,727 L30,729 V736 L24,739 L18,736Z" fill="#a8a8a8"/><path d="M24,731 L30,729 V736 L24,739Z" fill="#6e6e6e"/>
<text x="34.5" y="737" font-size="10" fill="#5a5a5a" font-family="Liberation Sans" textLength="87.6" lengthAdjust="spacingAndGlyphs">DenfordSpindleBr...</text>
<circle cx="137.5" cy="733.5" r="6.3" fill="#bcbcbc"/><circle cx="137.5" cy="730" r="1.1" fill="#fff"/><rect x="136.6" y="732" width="1.9" height="5" fill="#fff"/>
<rect x="158" y="610" width="134" height="113" fill="#ececec"/>
<g transform="translate(154.00,606.00) scale(0.10711)"><defs><linearGradient id="khg" x1="0" y1="0" x2="0" y2="1"><stop offset="0" stop-color="#a6a4a0"/><stop offset="1" stop-color="#6e6c68"/></linearGradient></defs>
<path d="M480,1010 L1130,690 L1180,720 L560,1040Z" fill="#d8d8d8"/>
<path d="M180,790 Q170,700 250,680 L830,345 Q950,300 1080,380 Q1160,430 1150,520 L1140,600 Q1130,650 1060,690 L480,990 Q400,1020 320,990 L230,950 Q170,920 178,860Z" fill="url(#khg)"/>
<path d="M470,850 L1140,520 L1140,600 Q1130,650 1060,690 L480,990Z" fill="#8c8a86"/>
<path d="M180,790 Q200,740 260,760 L470,850 L480,990 Q400,1020 320,990 L230,950 Q170,920 178,860Z" fill="#9c9a96"/>
<path d="M215,715 L820,350 Q900,325 1000,380 Q1090,440 1100,520 L470,850 Q380,850 300,800 Q230,760 215,715Z" fill="#3f3128"/>
<g fill="#221a16"><ellipse cx="855" cy="362" rx="30" ry="18"/><ellipse cx="1030" cy="458" rx="30" ry="18"/><ellipse cx="295" cy="688" rx="32" ry="20"/></g>
<circle cx="468" cy="792" r="24" fill="#c8a060"/></g>
<rect x="158" y="723" width="134" height="21" fill="#fbfbfb"/>
<path d="M162,729 L168,727 L174,729 V736 L168,739 L162,736Z" fill="#a8a8a8"/><path d="M168,731 L174,729 V736 L168,739Z" fill="#6e6e6e"/>
<text x="178.5" y="737" font-size="10" fill="#5a5a5a" font-family="Liberation Sans" textLength="43.4" lengthAdjust="spacingAndGlyphs">Keyholder</text>
<circle cx="281.5" cy="733.5" r="6.3" fill="#bcbcbc"/><circle cx="281.5" cy="730" r="1.1" fill="#fff"/><rect x="280.6" y="732" width="1.9" height="5" fill="#fff"/>
<rect x="14" y="754" width="134" height="113" fill="#ececec"/>
<g transform="translate(10.00,750.00) scale(0.10711)"><path d="M150,540 L650,780 L1040,1060 L820,1092 L150,600Z" fill="#d0d0d0"/>
<path d="M150,370 L235,325 L720,550 L625,745 L150,470Z" fill="#c9c7bf"/>
<ellipse cx="192" cy="395" rx="42" ry="62" transform="rotate(25 192 395)" fill="#d2d0c8" stroke="#333" stroke-width="7"/>
<path d="M640,585 L770,545 L1240,815 L1130,1070 L605,815Z" fill="#c8c6be"/>
<path d="M770,545 Q640,560 605,815" fill="none" stroke="#333" stroke-width="7"/>
<ellipse cx="1135" cy="935" rx="105" ry="145" transform="rotate(25 1135 935)" fill="#d0cec6" stroke="#222" stroke-width="8"/>
<ellipse cx="1135" cy="935" rx="42" ry="52" transform="rotate(25 1135 935)" fill="#c4c2ba" stroke="#333" stroke-width="6"/></g>
<rect x="14" y="867" width="134" height="21" fill="#fbfbfb"/>
<path d="M18,873 L24,871 L30,873 V880 L24,883 L18,880Z" fill="#a8a8a8"/><path d="M24,875 L30,873 V880 L24,883Z" fill="#6e6e6e"/>
<text x="34.5" y="881" font-size="10" fill="#5a5a5a" font-family="Liberation Sans" textLength="49.8" lengthAdjust="spacingAndGlyphs">MT2_Probe</text>
<circle cx="137.5" cy="877.5" r="6.3" fill="#bcbcbc"/><circle cx="137.5" cy="874" r="1.1" fill="#fff"/><rect x="136.6" y="876" width="1.9" height="5" fill="#fff"/>
<rect x="158" y="754" width="134" height="113" fill="#ececec"/>
<g transform="translate(154.00,750.00) scale(0.10711)"><path d="M150,560 L560,740 L1040,1070 L820,1092 L150,620Z" fill="#d0d0d0"/>
<path d="M145,400 L250,310 L705,505 L590,700 L145,470Z" fill="#c9c7bf"/>
<ellipse cx="200" cy="400" rx="52" ry="95" transform="rotate(25 200 400)" fill="#d0cec6" stroke="#222" stroke-width="8"/>
<path d="M560,590 L720,495 L1235,780 L1075,1085 L520,740Z" fill="#c7c5bd"/>
<path d="M720,495 Q560,540 540,780" fill="none" stroke="#333" stroke-width="7"/>
<ellipse cx="1120" cy="930" rx="108" ry="162" transform="rotate(25 1120 930)" fill="#cbc9c1" stroke="#222" stroke-width="8"/></g>
<rect x="158" y="867" width="134" height="21" fill="#fbfbfb"/>
<path d="M162,873 L168,871 L174,873 V880 L168,883 L162,880Z" fill="#a8a8a8"/><path d="M168,875 L174,873 V880 L168,883Z" fill="#6e6e6e"/>
<text x="178.5" y="881" font-size="10" fill="#5a5a5a" font-family="Liberation Sans" textLength="90" lengthAdjust="spacingAndGlyphs">Morse_Taper_N°6...</text>
<circle cx="281.5" cy="877.5" r="6.3" fill="#bcbcbc"/><circle cx="281.5" cy="874" r="1.1" fill="#fff"/><rect x="280.6" y="876" width="1.9" height="5" fill="#fff"/>
<rect x="14" y="898" width="134" height="113" fill="#ececec"/>
<g transform="translate(0,885) scale(0.15625)"><path d="M160,430 L330,475 L170,475Z" fill="#d0d0d0"/>
<path d="M200,335 L290,312 L660,475 L210,475 L180,400Z" fill="#c8c6be"/>
<path d="M155,330 L240,290 L290,312 L290,350 L200,380 L155,360Z" fill="#8a8882" stroke="#222" stroke-width="6"/>
<path d="M200,335 L290,312 L290,350 L200,380Z" fill="#c0beb6" stroke="#222" stroke-width="5"/>
<path d="M495,475 Q530,420 595,430" fill="none" stroke="#333" stroke-width="5"/></g>
<rect x="158" y="898" width="134" height="113" fill="#ececec"/>
<g transform="translate(0,885) scale(0.15625)"><path d="M1090,430 L1230,475 L1100,475Z" fill="#d0d0d0"/>
<path d="M1085,320 L1165,275 L1600,475 L1100,475 L1085,390Z" fill="#c8c6be"/>
<path d="M1165,278 Q1080,290 1090,385" fill="none" stroke="#222" stroke-width="7"/>
<path d="M1365,475 Q1400,405 1490,405" fill="none" stroke="#333" stroke-width="5"/></g>
</svg></div>
<div class="a" style="left:321px;top:18px;width:1727px;height:23px;background:#d9d9d9;border-bottom:2px solid #a8a8a8"></div>
<div class="a" style="left:321px;top:41px;width:1727px;height:18px;background:#d6d6d6;border-bottom:1px solid #b0b0b0"></div>
<svg style="left:0;top:0" width="2048" height="60">
<rect x="331" y="24.0" width="3.6" height="3.4" fill="#333"/>
<rect x="331" y="28.6" width="3.6" height="3.4" fill="#333"/>
<rect x="331" y="33.2" width="3.6" height="3.4" fill="#333"/>
<rect x="336" y="24.0" width="3.6" height="3.4" fill="#333"/>
<rect x="336" y="28.6" width="3.6" height="3.4" fill="#333"/>
<rect x="336" y="33.2" width="3.6" height="3.4" fill="#333"/>
<rect x="341" y="24.0" width="3.6" height="3.4" fill="#333"/>
<rect x="341" y="28.6" width="3.6" height="3.4" fill="#333"/>
<rect x="341" y="33.2" width="3.6" height="3.4" fill="#333"/>
<path d="M366,24 H373 L377,28 V37 H366 Z" fill="#444"/><path d="M382,28.5 L387,28.5 L384.5,31.5Z" fill="#444"/>
<rect x="407" y="24" width="12" height="12" rx="1" fill="#777"/><rect x="409.5" y="25" width="7" height="4" fill="#ddd"/><rect x="410" y="31" width="6" height="4" fill="#ddd"/>
<path d="M441,29 L446,25 V27.5 C450,27.5 453,29 453,33 C451,30.5 449,30.5 446,30.5 V33 Z" fill="#666"/><path d="M458,28.5 L463,28.5 L460.5,31.5Z" fill="#555"/>
<path d="M487,29 L482,25 V27.5 C478,27.5 475,29 475,33 C477,30.5 479,30.5 482,30.5 V33 Z" fill="#888"/><path d="M494,28.5 L499,28.5 L496.5,31.5Z" fill="#777"/>
<path d="M1988,28 L1994,28 L1991,32Z" fill="#222"/>
<circle cx="2022.3" cy="30.3" r="6.3" fill="#6a6a6a"/><text x="2022.3" y="34.3" font-size="10" font-weight="bold" fill="#fff" text-anchor="middle" font-family="Liberation Sans">?</text><path d="M2032,28 L2038,28 L2035,32Z" fill="#222"/>
<path d="M2033,53 L2037.5,48.5 L2042,53" fill="none" stroke="#666" stroke-width="1.6"/>
<line x1="480.5" y1="41" x2="480.5" y2="59" stroke="#a9a9a9" stroke-width="1.2"/>
<path d="M330.0,46 L335.0,44 L342.0,45 V53 L337.0,56 L330.0,54 Z" fill="#c9c9c9"/><path d="M337.0,47 L342.0,45 V53 L337.0,56 Z" fill="#bdbdbd"/>
<circle cx="456.0" cy="51.2" r="3.6" fill="none" stroke="#8fd0b4" stroke-width="1.3"/>
<path d="M466.5,47.5 L473.5,54.5 M473.5,47.5 L466.5,54.5" stroke="#555" stroke-width="1.8"/>
<line x1="640.6" y1="41" x2="640.6" y2="59" stroke="#a9a9a9" stroke-width="1.2"/>
<path d="M490.1,46 L495.1,44 L502.1,45 V53 L497.1,56 L490.1,54 Z" fill="#c9c9c9"/><path d="M497.1,47 L502.1,45 V53 L497.1,56 Z" fill="#bdbdbd"/>
<circle cx="616.1" cy="51.2" r="3.6" fill="none" stroke="#8fd0b4" stroke-width="1.3"/>
<path d="M626.6,47.5 L633.6,54.5 M633.6,47.5 L626.6,54.5" stroke="#555" stroke-width="1.8"/>
<line x1="800.7" y1="41" x2="800.7" y2="59" stroke="#a9a9a9" stroke-width="1.2"/>
<path d="M650.2,46 L655.2,44 L662.2,45 V53 L657.2,56 L650.2,54 Z" fill="#c9c9c9"/><path d="M657.2,47 L662.2,45 V53 L657.2,56 Z" fill="#bdbdbd"/>
<circle cx="776.2" cy="51.2" r="3.6" fill="none" stroke="#8fd0b4" stroke-width="1.3"/>
<path d="M786.7,47.5 L793.7,54.5 M793.7,47.5 L786.7,54.5" stroke="#555" stroke-width="1.8"/>
<line x1="960.8" y1="41" x2="960.8" y2="59" stroke="#a9a9a9" stroke-width="1.2"/>
<path d="M810.3,46 L815.3,44 L822.3,45 V53 L817.3,56 L810.3,54 Z" fill="#c9c9c9"/><path d="M817.3,47 L822.3,45 V53 L817.3,56 Z" fill="#bdbdbd"/>
<circle cx="936.3" cy="51.2" r="3.6" fill="none" stroke="#8fd0b4" stroke-width="1.3"/>
<path d="M946.8,47.5 L953.8,54.5 M953.8,47.5 L946.8,54.5" stroke="#555" stroke-width="1.8"/>
<rect x="961.4" y="42" width="159" height="17" fill="#ebebeb"/>
<line x1="1120.9" y1="41" x2="1120.9" y2="59" stroke="#a9a9a9" stroke-width="1.2"/>
<path d="M970.4,46 L975.4,44 L982.4,45 V53 L977.4,56 L970.4,54 Z" fill="#777"/><path d="M977.4,47 L982.4,45 V53 L977.4,56 Z" fill="#555"/>
<circle cx="1096.4" cy="51.2" r="3.6" fill="none" stroke="#8fd0b4" stroke-width="1.3"/>
<path d="M1106.9,47.5 L1113.9,54.5 M1113.9,47.5 L1106.9,54.5" stroke="#555" stroke-width="1.8"/>
</svg>
<svg style="left:0;top:0" width="2048" height="60">
<text x="1930.5" y="33.5" font-size="9.5" fill="#444" font-family="Liberation Sans" textLength="54.0" lengthAdjust="spacingAndGlyphs">CharlTintinger</text>
<text x="352.2" y="56" font-size="10.8" fill="#a0a0a0" font-family="Liberation Sans" textLength="86.9" lengthAdjust="spacingAndGlyphs">12mmHole v1 v1 v1*</text>
<text x="510.4" y="56" font-size="10.8" fill="#a0a0a0" font-family="Liberation Sans" textLength="91.8" lengthAdjust="spacingAndGlyphs">BoschRexr...art v3 v4</text>
<text x="670.3" y="56" font-size="10.8" fill="#a0a0a0" font-family="Liberation Sans" textLength="74.2" lengthAdjust="spacingAndGlyphs">Motor_1.5KW v7*</text>
<text x="830.4" y="56" font-size="10.8" fill="#a0a0a0" font-family="Liberation Sans" textLength="93.8" lengthAdjust="spacingAndGlyphs">Denford_..._15KW v4</text>
<text x="990.6" y="56" font-size="10.8" fill="#333" font-family="Liberation Sans" font-weight="bold" textLength="93.4" lengthAdjust="spacingAndGlyphs">1.5KWMot...ounts v6</text>
</svg>
<svg style="left:0;top:0" width="1100" height="300">
<rect x="325" y="63" width="672" height="48" fill="#e2e2e2"/>
<rect x="325" y="63" width="82" height="48" fill="#adadad"/>
<line x1="329.5" y1="70" x2="329.5" y2="104" stroke="#999" stroke-width="1"/><line x1="331.5" y1="70" x2="331.5" y2="104" stroke="#c8c8c8" stroke-width="1"/>
<text x="348.3" y="91.3" font-size="9" font-weight="bold" fill="#fff" font-family="Liberation Sans" textLength="33.2" lengthAdjust="spacingAndGlyphs">SCULPT</text><path d="M386,86 L391,86 L388.5,89Z" fill="#fff"/>
<line x1="461" y1="66" x2="461" y2="109" stroke="#cbcbcb" stroke-width="1"/><line x1="462" y1="66" x2="462" y2="109" stroke="#f2f2f2" stroke-width="1"/>
<line x1="516.6" y1="66" x2="516.6" y2="109" stroke="#cbcbcb" stroke-width="1"/><line x1="517.6" y1="66" x2="517.6" y2="109" stroke="#f2f2f2" stroke-width="1"/>
<line x1="588" y1="66" x2="588" y2="109" stroke="#cbcbcb" stroke-width="1"/><line x1="589" y1="66" x2="589" y2="109" stroke="#f2f2f2" stroke-width="1"/>
<line x1="647.5" y1="66" x2="647.5" y2="109" stroke="#cbcbcb" stroke-width="1"/><line x1="648.5" y1="66" x2="648.5" y2="109" stroke="#f2f2f2" stroke-width="1"/>
<line x1="755" y1="66" x2="755" y2="109" stroke="#cbcbcb" stroke-width="1"/><line x1="756" y1="66" x2="756" y2="109" stroke="#f2f2f2" stroke-width="1"/>
<line x1="830" y1="66" x2="830" y2="109" stroke="#cbcbcb" stroke-width="1"/><line x1="831" y1="66" x2="831" y2="109" stroke="#f2f2f2" stroke-width="1"/>
<line x1="889.6" y1="66" x2="889.6" y2="109" stroke="#cbcbcb" stroke-width="1"/><line x1="890.6" y1="66" x2="890.6" y2="109" stroke="#f2f2f2" stroke-width="1"/>
<line x1="942" y1="66" x2="942" y2="109" stroke="#cbcbcb" stroke-width="1"/><line x1="943" y1="66" x2="943" y2="109" stroke="#f2f2f2" stroke-width="1"/>
<text x="415" y="107.3" font-size="8.8" fill="#444" font-family="Liberation Sans" textLength="31.5" lengthAdjust="spacingAndGlyphs">CREATE</text>
<path d="M449.0,102.5 L454.0,102.5 L451.5,105.5Z" fill="#333"/>
<text x="470" y="107.3" font-size="8.8" fill="#444" font-family="Liberation Sans" textLength="30.0" lengthAdjust="spacingAndGlyphs">MODIFY</text>
<path d="M502.5,102.5 L507.5,102.5 L505.0,105.5Z" fill="#333"/>
<text x="526" y="107.3" font-size="8.8" fill="#444" font-family="Liberation Sans" textLength="45.0" lengthAdjust="spacingAndGlyphs">SYMMETRY</text>
<path d="M573.5,102.5 L578.5,102.5 L576.0,105.5Z" fill="#333"/>
<text x="597" y="107.3" font-size="8.8" fill="#444" font-family="Liberation Sans" textLength="33.4" lengthAdjust="spacingAndGlyphs">UTILITIES</text>
<path d="M632.9,102.5 L637.9,102.5 L635.4,105.5Z" fill="#333"/>
<text x="681" y="107.3" font-size="8.8" fill="#444" font-family="Liberation Sans" textLength="30.5" lengthAdjust="spacingAndGlyphs">SKETCH</text>
<path d="M714.0,102.5 L719.0,102.5 L716.5,105.5Z" fill="#333"/>
<text x="764" y="107.3" font-size="8.8" fill="#444" font-family="Liberation Sans" textLength="48.4" lengthAdjust="spacingAndGlyphs">CONSTRUCT</text>
<path d="M814.9,102.5 L819.9,102.5 L817.4,105.5Z" fill="#333"/>
<text x="839" y="107.3" font-size="8.8" fill="#444" font-family="Liberation Sans" textLength="32.0" lengthAdjust="spacingAndGlyphs">INSPECT</text>
<path d="M873.5,102.5 L878.5,102.5 L876.0,105.5Z" fill="#333"/>
<text x="898" y="107.3" font-size="8.8" fill="#444" font-family="Liberation Sans" textLength="27.0" lengthAdjust="spacingAndGlyphs">INSERT</text>
<path d="M927.5,102.5 L932.5,102.5 L930.0,105.5Z" fill="#333"/>
<text x="950" y="107.3" font-size="8.8" fill="#444" font-family="Liberation Sans" textLength="29.0" lengthAdjust="spacingAndGlyphs">SELECT</text>
<path d="M981.5,102.5 L986.5,102.5 L984.0,105.5Z" fill="#333"/>
<rect x="422" y="69" width="25" height="25" rx="6" fill="#b58ee8" stroke="#6b3fa8" stroke-width="1.2"/>
<path d="M434.5,69.5 V93.5 M422.5,81.5 H446.5" stroke="#6b3fa8" stroke-width="1"/><path d="M424,71 Q434,68 445,71 L445,80 L424,80Z" fill="#d4b8f7" opacity="0.7"/>
<path d="M478,86 L492,80 L503,85 L489,94 Z" fill="#b58ee8" stroke="#6b3fa8" stroke-width="1"/><circle cx="494" cy="82" r="3.5" fill="none" stroke="#333" stroke-width="1.2"/><line x1="494" y1="70" x2="494" y2="89" stroke="#333" stroke-width="1"/><line x1="487" y1="82" x2="501" y2="82" stroke="#333" stroke-width="1"/>
<path d="M552,71 L542,93 H552Z" fill="#b58ee8" stroke="#6b3fa8" stroke-width="1"/><path d="M552,71 L563,93 H552Z" fill="#8fb3e6" stroke="#4c74aa" stroke-width="1"/><line x1="552" y1="70" x2="552" y2="96" stroke="#222" stroke-width="1.2"/>
<rect x="605" y="70.5" width="12" height="15" rx="5" fill="#ddd" stroke="#777" stroke-width="1"/><rect x="613" y="79" width="11" height="14" rx="5" fill="#c9a5f0" stroke="#6b3fa8" stroke-width="1"/><path d="M620,73 L623,75 M611,88 L614,90" stroke="#333" stroke-width="1"/>
<rect x="656" y="72" width="21" height="20" fill="#dfe4ee" stroke="#555" stroke-width="1.3"/><path d="M662,88 L675,71 L679,74 L666,90Z" fill="#f2d15c" stroke="#555" stroke-width="0.8"/><path d="M674,88 H682 M678,84 V92" stroke="#fff" stroke-width="3"/><path d="M674,88 H682 M678,84 V92" stroke="#555" stroke-width="1"/>
<path d="M690,89 H704 C714,89 714,74 704,74" fill="none" stroke="#4870b6" stroke-width="1.5"/><circle cx="690" cy="89" r="1.8" fill="#4870b6"/><circle cx="704" cy="89" r="1.8" fill="#4870b6"/><circle cx="704" cy="74" r="1.8" fill="#4870b6"/>
<rect x="725" y="75" width="22" height="15" fill="#e4e8f0" stroke="#3d4f7a" stroke-width="1.3"/><circle cx="746.5" cy="75" r="1.8" fill="#4870b6"/><circle cx="725.5" cy="89.5" r="1.8" fill="#4870b6"/>
<path d="M781,76 L790,70 V90 L781,94Z" fill="#e8e8e8" stroke="#555" stroke-width="1"/><path d="M790,70 L795,72 V91 L790,94Z" fill="#4aa84a" stroke="#333" stroke-width="0.8"/><path d="M798,78 L806,71 V90 L798,97Z" fill="#f2a06a" stroke="#555" stroke-width="0.8"/>
<path d="M849,77.5 H872 M849,75 V80 M872,75 V80" stroke="#555" stroke-width="1.3"/><rect x="848" y="84" width="25" height="6" fill="#f0c030" stroke="#c09010" stroke-width="0.8"/>
<rect x="903" y="69" width="25" height="24" fill="#bcd9ea" stroke="#444" stroke-width="1.2"/><path d="M903.5,92.5 L913,78 L927.5,92.5Z" fill="#7a7d85"/><path d="M915,92.5 L921,83 L927.5,92.5Z" fill="#a9b0b9"/>
<rect x="953" y="67" width="32" height="31" fill="#4f86c0"/><rect x="956" y="70" width="17" height="11" fill="none" stroke="#43a043" stroke-width="1.5"/><path d="M973,81 L973,93 L976,90 L979,95 L981,94 L978.5,89 L982,89Z" fill="#fff" stroke="#1a2a40" stroke-width="0.8"/>
<rect x="325.5" y="114.5" width="239" height="20" fill="#d3d3d3" stroke="#bcbcbc"/>
<path d="M330,124.5 L334,121.5 V127.5Z M334,124.5 L338,121.5 V127.5Z" fill="#444"/>
<text x="346.6" y="127.3" font-size="9.4" fill="#666" font-family="Liberation Sans" textLength="41.3" lengthAdjust="spacingAndGlyphs">BROWSER</text>
<circle cx="551" cy="124" r="4.3" fill="#222"/><line x1="548.5" y1="124" x2="553.5" y2="124" stroke="#fff" stroke-width="1.3"/><line x1="561.5" y1="118" x2="561.5" y2="131" stroke="#aaa" stroke-width="1.5"/>
<rect x="354" y="139.7" width="152" height="13.6" fill="#8e8e8e"/><rect x="506" y="139.7" width="20" height="13.6" fill="#d6d6d6"/>
<path d="M339,152.5 L347,144.5 V152.5Z" fill="none" stroke="#333" stroke-width="1.1"/>
<circle cx="362.5" cy="145.0" r="3.6" fill="#f5e25a" stroke="#a09020" stroke-width="0.8"/><rect x="360.7" y="148.5" width="3.6" height="3" fill="#777"/>
<path d="M377,141.5 h5 v4 h4 v6 h-9Z" fill="#eee" stroke="#666" stroke-width="0.8"/>
<text x="399.8" y="150" font-size="9.2" font-weight="bold" fill="#fff" font-family="Liberation Sans" textLength="97.5" lengthAdjust="spacingAndGlyphs">1.5KWMotorMounts v6</text>
<circle cx="514.5" cy="146.5" r="4.6" fill="#fff" stroke="#222" stroke-width="1.1"/><circle cx="514.5" cy="146.5" r="2" fill="#222"/>
<rect x="368.4" y="158.4" width="87.4" height="15" fill="#d7d7d7"/>
<path d="M353.5,160.9 L361,165.9 L353.5,170.9Z" fill="none" stroke="#333" stroke-width="1.1"/>
<path d="M370.5,161.9 h4 l1,1.5 h7.5 v8 h-12.5Z" fill="#f2f2f2" stroke="#555" stroke-width="0.9"/>
<text x="394.7" y="169.0" font-size="9" fill="#444" font-family="Liberation Sans" textLength="52.9" lengthAdjust="spacingAndGlyphs">Named Views</text>
<rect x="368.4" y="177.0" width="71.2" height="15" fill="#d7d7d7"/>
<path d="M370.5,179.0 h8 l3,3 v8.5 h-11Z" fill="#f2f2f2" stroke="#555" stroke-width="0.9"/><line x1="370" y1="190.5" x2="382" y2="190.5" stroke="#e0a020" stroke-width="1.5"/>
<text x="394.7" y="187.6" font-size="9" fill="#444" font-family="Liberation Sans" textLength="37" lengthAdjust="spacingAndGlyphs">Units: mm</text>
<rect x="368.4" y="196.5" width="75.5" height="15" fill="#d7d7d7"/>
<path d="M353.5,199.0 L361,204.0 L353.5,209.0Z" fill="none" stroke="#333" stroke-width="1.1"/>
<circle cx="376.5" cy="202.3" r="3.6" fill="#d8ecfa" stroke="#6f8aa6" stroke-width="0.8"/><rect x="374.7" y="205.8" width="3.6" height="3" fill="#777"/>
<path d="M390.5,200.0 h4 l1,1.5 h7.5 v8 h-12.5Z" fill="#f2f2f2" stroke="#555" stroke-width="0.9"/>
<text x="414.5" y="207.1" font-size="9" fill="#444" font-family="Liberation Sans" textLength="22.2" lengthAdjust="spacingAndGlyphs">Origin</text>
<rect x="368.4" y="215.5" width="91.6" height="15" fill="#d7d7d7"/>
<path d="M353.5,218.0 L361,223.0 L353.5,228.0Z" fill="none" stroke="#333" stroke-width="1.1"/>
<circle cx="376.5" cy="221.3" r="3.6" fill="#f5e25a" stroke="#a09020" stroke-width="0.8"/><rect x="374.7" y="224.8" width="3.6" height="3" fill="#777"/>
<path d="M390.5,219.0 h4 l1,1.5 h7.5 v8 h-12.5Z" fill="#f2f2f2" stroke="#555" stroke-width="0.9"/>
<text x="414.5" y="226.1" font-size="9" fill="#444" font-family="Liberation Sans" textLength="35.7" lengthAdjust="spacingAndGlyphs">Sketches</text>
<rect x="368.4" y="234.7" width="110.3" height="15" fill="#d7d7d7"/>
<path d="M353.5,237.2 L361,242.2 L353.5,247.2Z" fill="none" stroke="#333" stroke-width="1.1"/>
<circle cx="376.5" cy="240.5" r="3.6" fill="#d8ecfa" stroke="#6f8aa6" stroke-width="0.8"/><rect x="374.7" y="244.0" width="3.6" height="3" fill="#777"/>
<path d="M390.5,236.7 h5 v5 h7 v7 h-12Z" fill="#f2f2f2" stroke="#555" stroke-width="0.9"/>
<text x="414.5" y="245.3" font-size="9" fill="#444" font-family="Liberation Sans" textLength="55.7" lengthAdjust="spacingAndGlyphs">DEFAULT (1):1</text>
<rect x="368.4" y="253.9" width="158.6" height="15" fill="#d7d7d7"/>
<path d="M353.5,256.4 L361,261.4 L353.5,266.4Z" fill="none" stroke="#333" stroke-width="1.1"/>
<circle cx="376.5" cy="259.7" r="3.6" fill="#f5e25a" stroke="#a09020" stroke-width="0.8"/><rect x="374.7" y="263.2" width="3.6" height="3" fill="#777"/>
<rect x="390.5" y="256.4" width="12" height="11" rx="2.5" fill="#f2f2f2" stroke="#555" stroke-width="0.9"/>
<text x="414.5" y="264.5" font-size="9" fill="#444" font-family="Liberation Sans" textLength="104.4" lengthAdjust="spacingAndGlyphs">Motor_Mount_Motor_Side:1</text>
<rect x="368.4" y="273.2" width="168.0" height="15" fill="#d7d7d7"/>
<path d="M353.5,275.7 L361,280.7 L353.5,285.7Z" fill="none" stroke="#333" stroke-width="1.1"/>
<circle cx="376.5" cy="279.0" r="3.6" fill="#d8ecfa" stroke="#6f8aa6" stroke-width="0.8"/><rect x="374.7" y="282.5" width="3.6" height="3" fill="#777"/>
<rect x="390.5" y="275.7" width="12" height="11" rx="2.5" fill="#f2f2f2" stroke="#555" stroke-width="0.9"/>
<text x="414.5" y="283.8" font-size="9" fill="#444" font-family="Liberation Sans" textLength="113.9" lengthAdjust="spacingAndGlyphs">Motor_Mount_Machine_Side:1</text>
</svg>
<svg style="left:0;top:1080px" width="2048" height="40">
<rect x="325.5" y="16.5" width="239" height="20" fill="#d3d3d3" stroke="#bcbcbc"/>
<text x="346.9" y="30" font-size="9.4" fill="#666" font-family="Liberation Sans" textLength="44.5" lengthAdjust="spacingAndGlyphs">COMMENTS</text>
<circle cx="551" cy="26.5" r="4.3" fill="#222"/><path d="M548.5,26.5 H553.5 M551,24 V29" stroke="#fff" stroke-width="1.2"/><line x1="561.5" y1="20" x2="561.5" y2="33" stroke="#aaa" stroke-width="1.5"/>
<rect x="1087" y="18" width="115" height="18.5" fill="#cdcdcd"/><rect x="1207.5" y="18" width="75" height="18.5" fill="#cdcdcd"/>
<ellipse cx="1095" cy="27" rx="4" ry="6.5" fill="none" stroke="#444" stroke-width="1.1"/><path d="M1089,27 H1101" stroke="#444" stroke-width="1"/><path d="M1105.5,25.5 L1110,25.5 L1107.7,28.5Z" fill="#222"/>
<rect x="1116" y="24.5" width="12" height="8" fill="none" stroke="#444" stroke-width="1.2"/><rect x="1119" y="27" width="6" height="3" fill="#444"/><path d="M1118,23 L1126,20" stroke="#444" stroke-width="1"/>
<path d="M1138,33 L1136,26 Q1136,24 1138,25 L1139,28 V21 Q1140,20 1141,21 V27 V20 Q1142,19 1143,20 V27 V21 Q1144,20 1145,21 V28 V23 Q1146,22 1147,23 V30 Q1146,34 1142,34Z" fill="#fff" stroke="#444" stroke-width="1"/>
<circle cx="1161" cy="28" r="4" fill="#eee" stroke="#444" stroke-width="1.3"/><path d="M1164,31 L1168,35" stroke="#444" stroke-width="2"/><path d="M1166,22 H1170 M1168,20 V24" stroke="#444" stroke-width="0.8"/>
<circle cx="1182" cy="27" r="5" fill="#eee" stroke="#444" stroke-width="1.3"/><path d="M1185.5,30.5 L1189,34.5" stroke="#444" stroke-width="2"/><path d="M1194.5,25.5 L1199,25.5 L1196.7,28.5Z" fill="#222"/>
<rect x="1210" y="21" width="13" height="10" fill="#8fb0dc" stroke="#55657a" stroke-width="1.2"/><rect x="1214" y="31" width="5" height="3" fill="#666"/><path d="M1225,25.5 L1229.5,25.5 L1227.2,28.5Z" fill="#222"/>
<rect x="1235.5" y="20.5" width="12" height="13" fill="none" stroke="#666" stroke-width="1"/><path d="M1235.5,24.5 H1247.5 M1235.5,28.5 H1247.5 M1239.5,20.5 V33.5 M1243.5,20.5 V33.5" stroke="#666" stroke-width="0.8"/><path d="M1250.5,25.5 L1255,25.5 L1252.7,28.5Z" fill="#222"/>
<rect x="1260.5" y="21.5" width="12" height="11" fill="#c9d7ea" stroke="#3d62a0" stroke-width="1.1"/><path d="M1266.5,21.5 V32.5 M1260.5,27 H1272.5" stroke="#3d62a0" stroke-width="1"/><path d="M1275,25.5 L1279.5,25.5 L1277.2,28.5Z" fill="#222"/>
</svg>
<svg style="left:0;top:0" width="2048" height="160">
<defs><radialGradient id="vcg" cx="0.5" cy="0.5" r="0.6"><stop offset="0" stop-color="#d8d8d8" stop-opacity="0.5"/><stop offset="1" stop-color="#ececec" stop-opacity="0"/></radialGradient></defs>
<ellipse cx="1997" cy="108" rx="40" ry="36" fill="url(#vcg)"/>
<path d="M1976,87 L2013,82.5 L2007.5,118 L1968.5,118Z" fill="#dedede" stroke="#c8c8c8" stroke-width="0.8"/>
<path d="M2013,82.5 L2018,100 L2014,136 L2007.5,118Z" fill="#e6e6e6" stroke="#cfcfcf" stroke-width="0.7"/>
<path d="M1968.5,118 L2007.5,118 L2014,136 L1983,136Z" fill="#e4e4e4" stroke="#c0c0c0" stroke-width="0.8" stroke-dasharray="2,1.5"/>
<text x="0" y="0" font-size="9.5" font-weight="bold" font-style="italic" fill="#6a6a6a" text-anchor="middle" font-family="Liberation Sans" transform="translate(1990.5,97) rotate(176)">LEFT</text>
<line x1="1973.5" y1="85" x2="2012.7" y2="82.4" stroke="#5060d8" stroke-width="1.6"/>
<line x1="2012.7" y1="82.4" x2="2025.5" y2="111" stroke="#d83a3a" stroke-width="1.3"/>
<line x1="2012.7" y1="82.4" x2="2005.4" y2="134" stroke="#4ad04a" stroke-width="1.3"/>
<text x="1962" y="90" font-size="9.5" font-weight="bold" fill="#6a78e0" font-family="Liberation Sans">Z</text>
</svg>
</body></html>
